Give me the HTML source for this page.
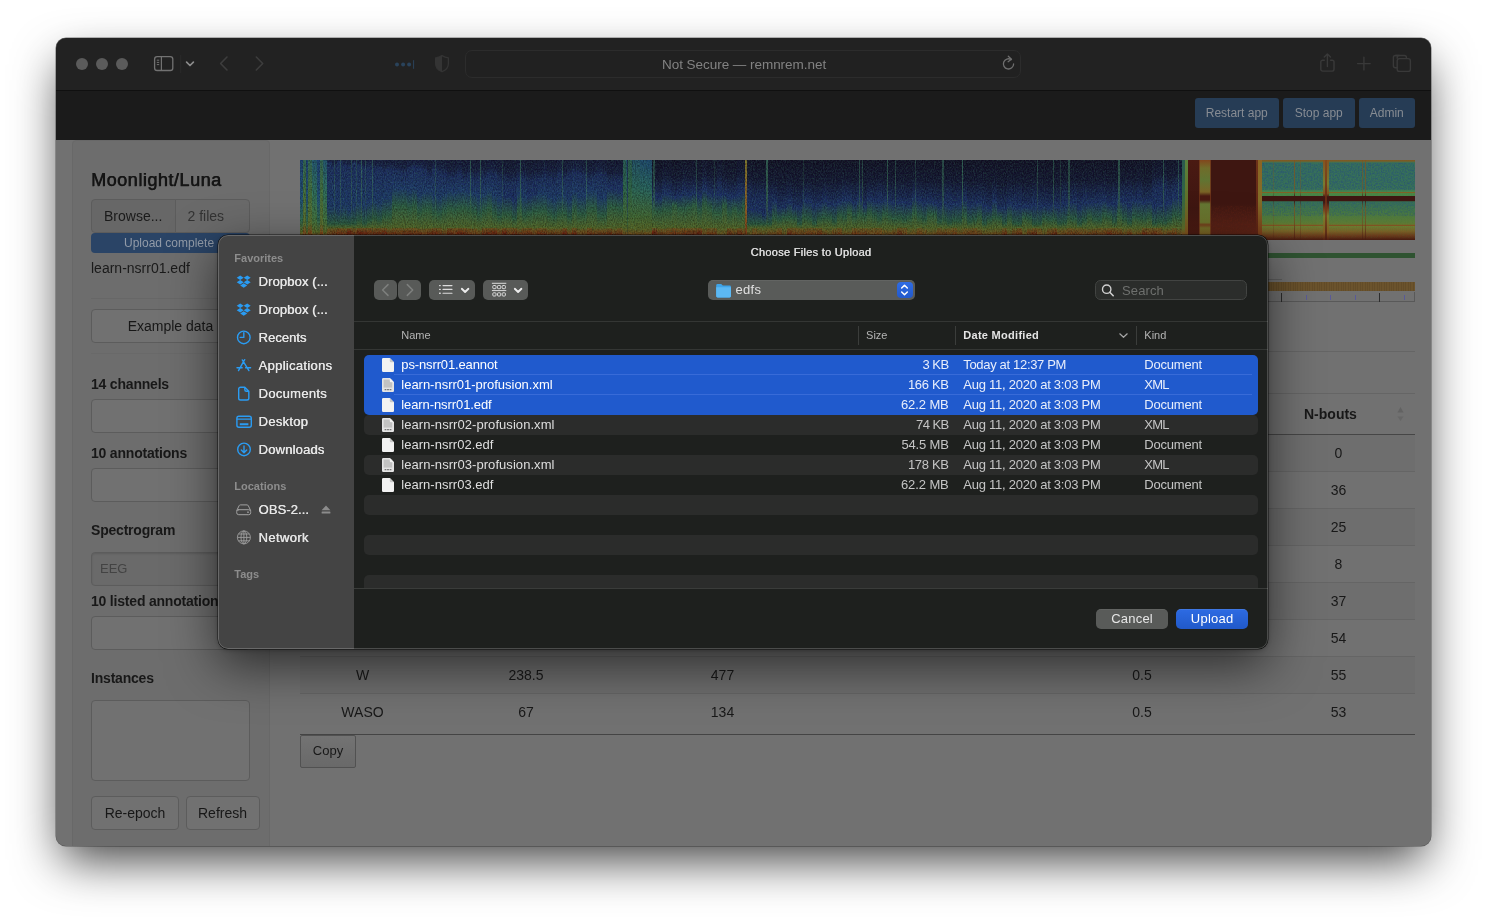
<!DOCTYPE html>
<html lang="en">
<head>
<meta charset="utf-8">
<title>Moonlight/Luna</title>
<style>
*{box-sizing:border-box}
html,body{margin:0;padding:0}
body{width:1486px;height:920px;background:#fff;overflow:hidden;position:relative;font-family:"Liberation Sans",Arial,sans-serif;font-size:14px;color:#171717}
.abs,.win *{position:absolute}
.win{position:absolute;left:55.5px;top:37.6px;width:1375.2px;height:808.7px;border-radius:10px;overflow:hidden;background:#717171;
 box-shadow:0 0 0 .5px rgba(0,0,0,.5),0 20px 48px -6px rgba(0,0,0,.75)}
.in{left:-55.5px;top:-37.6px;width:1486px;height:920px;will-change:transform}
.t{white-space:nowrap;line-height:1}
/* title bar */
.tbar{left:56px;top:38px;width:1375px;height:52px;background:#222222}
.tbar-b{left:56px;top:90px;width:1375px;height:1px;background:#101010}
.nav{left:56px;top:91px;width:1375px;height:49px;background:#1b1b1b}
.tl{width:12px;height:12px;border-radius:50%;background:#5b5b5b;top:58px}
.url{left:465px;top:50px;width:556px;height:28px;border-radius:7px;border:1px solid #2c2c2c;background:#212121}
.nbtn{top:98px;height:30px;border-radius:3px;background:#263c55;color:#878c93;font-size:12px;text-align:center;line-height:31px;white-space:nowrap}
/* web page */
.well{left:72px;top:140px;width:198px;height:720px;background:#6d6d6d;border:1px solid #686868;border-radius:4px}
.fc{background:#717171;border:1px solid #5c5c5c;border-radius:4px}
.lbl{font-weight:bold;font-size:14px;color:#181818;left:91px;letter-spacing:-.2px}
.btn{border:1px solid #5c5c5c;border-radius:4px;background:#717171;text-align:center;font-size:14px;color:#171717;white-space:nowrap}
.hl{height:1px;background:#656565;left:300px;width:1115px}
.td{font-size:14px;color:#181818;white-space:nowrap;line-height:1;transform:translateX(-50%)}
.dlg{left:218.4px;top:235.2px;width:1050px;height:413.6px;border-radius:10px;overflow:hidden;background:#1e201e;box-shadow:0 0 0 .5px rgba(0,0,0,.75),0 16px 50px rgba(0,0,0,.6),0 1px 5px rgba(0,0,0,.25)}
.dlg:after{content:"";position:absolute;left:0;top:0;right:0;bottom:0;border-radius:10px;border:1px solid rgba(255,255,255,.2);pointer-events:none}
.din{left:-218.4px;top:-235.2px;width:1486px;height:920px}
</style>
</head>
<body>
<div class="win"><div class="in">
<!--TB0-->
<div class="tbar"></div><div class="tbar-b"></div><div class="nav"></div>
<div class="tl" style="left:76px"></div><div class="tl" style="left:96px"></div><div class="tl" style="left:116px"></div>
<svg style="left:150px;top:50px" width="120" height="28" viewBox="150 50 120 28" fill="none">
 <rect x="154.6" y="56.7" width="18.2" height="13.8" rx="2.6" stroke="#727272" stroke-width="1.3"/>
 <path d="M161.4 57v13.4" stroke="#727272" stroke-width="1.2"/>
 <path d="M156.8 60.2h2.4M156.8 62.4h2.4M156.8 64.6h2.4" stroke="#727272" stroke-width="1"/>
 <path d="M180.8 55v18" stroke="#2b2b2b" stroke-width="1"/>
 <path d="M186.6 62.2l3.4 3.3 3.4-3.3" stroke="#8c8c8c" stroke-width="1.7" stroke-linecap="round" stroke-linejoin="round"/>
 <path d="M227 57l-6.4 6.5 6.4 6.5" stroke="#3d3d3d" stroke-width="1.6" stroke-linecap="round" stroke-linejoin="round"/>
 <path d="M256.3 57l6.4 6.5-6.4 6.5" stroke="#3d3d3d" stroke-width="1.6" stroke-linecap="round" stroke-linejoin="round"/>
</svg>
<svg style="left:390px;top:50px" width="64" height="28" viewBox="390 50 64 28" fill="none">
 <circle cx="397" cy="64.5" r="2" fill="#2a435b"/><circle cx="403.1" cy="64.5" r="2" fill="#2a435b"/><circle cx="409.1" cy="64.5" r="2" fill="#2a435b"/>
 <path d="M413.6 60.2v8.6" stroke="#2a435b" stroke-width="1"/>
 <path d="M442 55.6c-2 1.2-4.2 2-6.4 2.3v5.6c0 4 2.7 6.8 6.4 8.1 3.700-1.300 6.400-4.100 6.400-8.100v-5.600c-2.200-.300-4.400-1.100-6.400-2.300z" stroke="#343434" stroke-width="1.3" stroke-linejoin="round"/>
 <path d="M442 55.6c-2 1.2-4.2 2-6.400 2.300v5.600c0 4 2.700 6.800 6.400 8.100z" fill="#343434"/>
</svg>
<div class="url"></div>
<div class="t" id="urlt" style="left:662px;top:58px;font-size:13.5px;color:#828282;letter-spacing:-.04px">Not Secure — remnrem.net</div>
<svg style="left:1000px;top:55px" width="18" height="18" viewBox="1000 55 18 18" fill="none">
 <path d="M1013.6 63.900a5.100 5.100 0 1 1-2.400-4.350" stroke="#6f6f6f" stroke-width="1.3" stroke-linecap="round"/>
 <path d="M1008.3 56.300l3.200 2.900-3.400 2.500" stroke="#6f6f6f" stroke-width="1.3" stroke-linecap="round" stroke-linejoin="round"/>
</svg>
<svg style="left:1314px;top:50px" width="104" height="28" viewBox="1314 50 104 28" fill="none" stroke="#393939" stroke-width="1.4" stroke-linecap="round" stroke-linejoin="round">
 <path d="M1324.300 60.300h-1.700a1.800 1.800 0 0 0-1.800 1.800v7.200a1.800 1.800 0 0 0 1.800 1.800h9.600a1.800 1.800 0 0 0 1.800-1.800v-7.200a1.800 1.800 0 0 0-1.800-1.800h-1.700"/>
 <path d="M1327.400 66.500v-12.300M1324.300 57l3.100-3.100 3.100 3.100"/>
 <path d="M1363.900 57.300v12.600M1357.600 63.600h12.600"/>
 <path d="M1397.200 58.300v-.8a2 2 0 0 1 2-2h-3.800a2 2 0 0 0-2 2v8.200a2 2 0 0 0 2 2h1.600" />
 <path d="M1395.400 55.500h9a2 2 0 0 1 2 2v.8"/>
 <rect x="1397.200" y="58.600" width="13.200" height="12.800" rx="2.200"/>
</svg>
<div class="nbtn" id="nb1" style="left:1194.5px;width:84.5px">Restart app</div>
<div class="nbtn" id="nb2" style="left:1283px;width:71.500px">Stop app</div>
<div class="nbtn" id="nb3" style="left:1358.500px;width:56.500px">Admin</div>
<!--TB1-->
<!--PG0-->
<div class="well"></div>
<div class="t" id="h4" style="left:91px;top:171px;font-size:18px;color:#161616;letter-spacing:.53px;text-shadow:.5px 0 0 #161616;-webkit-text-stroke:.25px #161616">Moonlight/Luna</div>
<div class="fc" style="left:91px;top:199px;width:85px;height:34px;border-radius:4px 0 0 4px;background:#676767"></div>
<div class="fc" style="left:175px;top:199px;width:75px;height:34px;border-radius:0 4px 4px 0;background:#6a6a6a"></div>
<div class="t" style="left:104px;top:209px;font-size:14px;color:#1a1a1a">Browse...</div>
<div class="t" style="left:187.500px;top:209px;font-size:14px;color:#333">2 files</div>
<div style="left:91px;top:233px;width:159px;height:20px;border-radius:4px;background:#2a4466"></div>
<div class="t" style="left:124px;top:237px;font-size:12px;color:#929ba8">Upload complete</div>
<div class="t" style="left:91px;top:261px;font-size:14px;color:#1a1a1a">learn-nsrr01.edf</div>
<div style="left:91px;top:298px;width:159px;height:1px;background:#676767"></div>
<div class="btn" style="left:91px;top:309px;width:159px;height:34px;line-height:32px">Example data</div>
<div style="left:91px;top:353px;width:159px;height:1px;background:#696969"></div>
<div class="t lbl" style="top:377px">14 channels</div>
<div class="fc" style="left:91px;top:399px;width:159px;height:34px"></div>
<div class="t lbl" style="top:445.500px">10 annotations</div>
<div class="fc" style="left:91px;top:468px;width:159px;height:34px"></div>
<div class="t lbl" style="top:523px">Spectrogram</div>
<div class="fc" style="left:91px;top:552px;width:159px;height:34px;background:#6a6a6a;box-shadow:inset 0 1px 2px rgba(0,0,0,.12)"></div>
<div class="t" style="left:100px;top:562px;font-size:13px;color:#434343">EEG</div>
<div class="t lbl" style="top:594px">10 listed annotations</div>
<div class="fc" style="left:91px;top:616px;width:159px;height:34px"></div>
<div class="t lbl" style="top:671px">Instances</div>
<div class="fc" style="left:91px;top:700px;width:159px;height:81px"></div>
<div class="btn" style="left:91px;top:796px;width:88px;height:34px;line-height:32px">Re-epoch</div>
<div class="btn" style="left:185.500px;top:796px;width:74px;height:34px;line-height:32px">Refresh</div>
<!--SP0-->
<svg style="left:300px;top:160px" width="1115" height="80" viewBox="0 0 1115 80" preserveAspectRatio="none" shape-rendering="crispEdges"><defs><linearGradient id="g1" x1="0" y1="0" x2="0" y2="1"><stop offset="0.000" stop-color="#181b40"/><stop offset="0.019" stop-color="#191f48"/><stop offset="0.035" stop-color="#1d2b5e"/><stop offset="0.596" stop-color="#1f386a"/><stop offset="0.800" stop-color="#2f5d43"/><stop offset="0.850" stop-color="#5d6f2c"/><stop offset="0.866" stop-color="#785e22"/><stop offset="0.946" stop-color="#843b16"/><stop offset="1.000" stop-color="#7e2610"/></linearGradient><linearGradient id="g2" x1="0" y1="0" x2="0" y2="1"><stop offset="0.000" stop-color="#181b3f"/><stop offset="0.050" stop-color="#191f48"/><stop offset="0.091" stop-color="#1d2b5e"/><stop offset="0.585" stop-color="#1f386a"/><stop offset="0.800" stop-color="#2f5d43"/><stop offset="0.850" stop-color="#5d6f2c"/><stop offset="0.861" stop-color="#785e22"/><stop offset="0.941" stop-color="#802e12"/><stop offset="1.000" stop-color="#7e2610"/></linearGradient><linearGradient id="g3" x1="0" y1="0" x2="0" y2="1"><stop offset="0.000" stop-color="#181b40"/><stop offset="0.011" stop-color="#191f48"/><stop offset="0.020" stop-color="#1d2b5e"/><stop offset="0.622" stop-color="#1f386a"/><stop offset="0.800" stop-color="#2f5d43"/><stop offset="0.850" stop-color="#5d6f2c"/><stop offset="0.825" stop-color="#785e22"/><stop offset="0.905" stop-color="#843b16"/><stop offset="1.000" stop-color="#7e2610"/></linearGradient><linearGradient id="g4" x1="0" y1="0" x2="0" y2="1"><stop offset="0.000" stop-color="#181b40"/><stop offset="0.042" stop-color="#191f48"/><stop offset="0.076" stop-color="#1d2b5e"/><stop offset="0.573" stop-color="#1f386a"/><stop offset="0.793" stop-color="#2f5d43"/><stop offset="0.850" stop-color="#5d6f2c"/><stop offset="0.860" stop-color="#785e22"/><stop offset="0.940" stop-color="#802e12"/><stop offset="1.000" stop-color="#7e2610"/></linearGradient><linearGradient id="g5" x1="0" y1="0" x2="0" y2="1"><stop offset="0.000" stop-color="#181b3f"/><stop offset="0.050" stop-color="#191f48"/><stop offset="0.090" stop-color="#1d2b5e"/><stop offset="0.632" stop-color="#1f386a"/><stop offset="0.800" stop-color="#2f5d43"/><stop offset="0.850" stop-color="#5d6f2c"/><stop offset="0.824" stop-color="#785e22"/><stop offset="0.904" stop-color="#7e2610"/><stop offset="1.000" stop-color="#7e2610"/></linearGradient><linearGradient id="g6" x1="0" y1="0" x2="0" y2="1"><stop offset="0.000" stop-color="#181b40"/><stop offset="0.021" stop-color="#191f48"/><stop offset="0.037" stop-color="#1d2b5e"/><stop offset="0.574" stop-color="#1f386a"/><stop offset="0.794" stop-color="#2f5d43"/><stop offset="0.850" stop-color="#5d6f2c"/><stop offset="0.859" stop-color="#785e22"/><stop offset="0.939" stop-color="#802e12"/><stop offset="1.000" stop-color="#7e2610"/></linearGradient><linearGradient id="g7" x1="0" y1="0" x2="0" y2="1"><stop offset="0.000" stop-color="#181b40"/><stop offset="0.036" stop-color="#191f48"/><stop offset="0.066" stop-color="#1d2b5e"/><stop offset="0.539" stop-color="#1f386a"/><stop offset="0.759" stop-color="#2f5d43"/><stop offset="0.850" stop-color="#5d6f2c"/><stop offset="0.828" stop-color="#785e22"/><stop offset="0.908" stop-color="#7e2610"/><stop offset="1.000" stop-color="#7e2610"/></linearGradient><linearGradient id="g8" x1="0" y1="0" x2="0" y2="1"><stop offset="0.000" stop-color="#181a3f"/><stop offset="0.054" stop-color="#191f47"/><stop offset="0.098" stop-color="#1d2b5e"/><stop offset="0.578" stop-color="#1f386a"/><stop offset="0.798" stop-color="#2f5d43"/><stop offset="0.850" stop-color="#5d6f2c"/><stop offset="0.827" stop-color="#785e22"/><stop offset="0.907" stop-color="#802e12"/><stop offset="1.000" stop-color="#7e2610"/></linearGradient><linearGradient id="g9" x1="0" y1="0" x2="0" y2="1"><stop offset="0.000" stop-color="#181b40"/><stop offset="0.046" stop-color="#191f48"/><stop offset="0.084" stop-color="#1d2b5e"/><stop offset="0.536" stop-color="#1f386a"/><stop offset="0.756" stop-color="#2f5d43"/><stop offset="0.850" stop-color="#5d6f2c"/><stop offset="0.824" stop-color="#785e22"/><stop offset="0.904" stop-color="#843b16"/><stop offset="1.000" stop-color="#7e2610"/></linearGradient><linearGradient id="g10" x1="0" y1="0" x2="0" y2="1"><stop offset="0.000" stop-color="#181a3e"/><stop offset="0.062" stop-color="#191f46"/><stop offset="0.113" stop-color="#1d2b5e"/><stop offset="0.504" stop-color="#1f386a"/><stop offset="0.724" stop-color="#2f5d43"/><stop offset="0.850" stop-color="#5d6f2c"/><stop offset="0.857" stop-color="#785e22"/><stop offset="0.937" stop-color="#7e2610"/><stop offset="1.000" stop-color="#7e2610"/></linearGradient><linearGradient id="g11" x1="0" y1="0" x2="0" y2="1"><stop offset="0.000" stop-color="#181a3e"/><stop offset="0.056" stop-color="#191f47"/><stop offset="0.102" stop-color="#1d2b5e"/><stop offset="0.530" stop-color="#1f386a"/><stop offset="0.750" stop-color="#2f5d43"/><stop offset="0.850" stop-color="#5d6f2c"/><stop offset="0.845" stop-color="#785e22"/><stop offset="0.925" stop-color="#802e12"/><stop offset="1.000" stop-color="#7e2610"/></linearGradient><linearGradient id="g12" x1="0" y1="0" x2="0" y2="1"><stop offset="0.000" stop-color="#17193c"/><stop offset="0.077" stop-color="#191e45"/><stop offset="0.140" stop-color="#1d2b5e"/><stop offset="0.478" stop-color="#1f386a"/><stop offset="0.698" stop-color="#2f5d43"/><stop offset="0.850" stop-color="#5d6f2c"/><stop offset="0.837" stop-color="#785e22"/><stop offset="0.917" stop-color="#7e2610"/><stop offset="1.000" stop-color="#7e2610"/></linearGradient><linearGradient id="g13" x1="0" y1="0" x2="0" y2="1"><stop offset="0.000" stop-color="#171a3d"/><stop offset="0.065" stop-color="#191e46"/><stop offset="0.117" stop-color="#1d2b5e"/><stop offset="0.473" stop-color="#1f386a"/><stop offset="0.693" stop-color="#2f5d43"/><stop offset="0.850" stop-color="#5d6f2c"/><stop offset="0.871" stop-color="#785e22"/><stop offset="0.951" stop-color="#7e2610"/><stop offset="1.000" stop-color="#7e2610"/></linearGradient><linearGradient id="g14" x1="0" y1="0" x2="0" y2="1"><stop offset="0.000" stop-color="#17193c"/><stop offset="0.072" stop-color="#191e45"/><stop offset="0.130" stop-color="#1d2b5e"/><stop offset="0.351" stop-color="#1f386a"/><stop offset="0.571" stop-color="#2f5d43"/><stop offset="0.850" stop-color="#5d6f2c"/><stop offset="0.856" stop-color="#785e22"/><stop offset="0.936" stop-color="#802e12"/><stop offset="1.000" stop-color="#7e2610"/></linearGradient><linearGradient id="g15" x1="0" y1="0" x2="0" y2="1"><stop offset="0.000" stop-color="#17193b"/><stop offset="0.080" stop-color="#191e45"/><stop offset="0.146" stop-color="#1d2b5d"/><stop offset="0.358" stop-color="#1f386a"/><stop offset="0.578" stop-color="#2f5d43"/><stop offset="0.850" stop-color="#5d6f2c"/><stop offset="0.854" stop-color="#785e22"/><stop offset="0.934" stop-color="#843b16"/><stop offset="1.000" stop-color="#7e2610"/></linearGradient><linearGradient id="g16" x1="0" y1="0" x2="0" y2="1"><stop offset="0.000" stop-color="#171839"/><stop offset="0.095" stop-color="#181d43"/><stop offset="0.173" stop-color="#1d2a5d"/><stop offset="0.351" stop-color="#1f386a"/><stop offset="0.571" stop-color="#2f5d43"/><stop offset="0.850" stop-color="#5d6f2c"/><stop offset="0.859" stop-color="#785e22"/><stop offset="0.939" stop-color="#7e2610"/><stop offset="1.000" stop-color="#7e2610"/></linearGradient><linearGradient id="g17" x1="0" y1="0" x2="0" y2="1"><stop offset="0.000" stop-color="#171a3d"/><stop offset="0.065" stop-color="#191e46"/><stop offset="0.118" stop-color="#1d2b5e"/><stop offset="0.385" stop-color="#1f386a"/><stop offset="0.605" stop-color="#2f5d43"/><stop offset="0.850" stop-color="#5d6f2c"/><stop offset="0.855" stop-color="#785e22"/><stop offset="0.935" stop-color="#7e2610"/><stop offset="1.000" stop-color="#7e2610"/></linearGradient><linearGradient id="g18" x1="0" y1="0" x2="0" y2="1"><stop offset="0.000" stop-color="#181a3f"/><stop offset="0.054" stop-color="#191f47"/><stop offset="0.098" stop-color="#1d2b5e"/><stop offset="0.355" stop-color="#1f386a"/><stop offset="0.575" stop-color="#2f5d43"/><stop offset="0.850" stop-color="#5d6f2c"/><stop offset="0.839" stop-color="#785e22"/><stop offset="0.919" stop-color="#843b16"/><stop offset="1.000" stop-color="#7e2610"/></linearGradient><linearGradient id="g19" x1="0" y1="0" x2="0" y2="1"><stop offset="0.000" stop-color="#181a3e"/><stop offset="0.057" stop-color="#191f47"/><stop offset="0.104" stop-color="#1d2b5e"/><stop offset="0.430" stop-color="#1f386a"/><stop offset="0.650" stop-color="#2f5d43"/><stop offset="0.850" stop-color="#5d6f2c"/><stop offset="0.865" stop-color="#785e22"/><stop offset="0.945" stop-color="#7e2610"/><stop offset="1.000" stop-color="#7e2610"/></linearGradient><linearGradient id="g20" x1="0" y1="0" x2="0" y2="1"><stop offset="0.000" stop-color="#17193c"/><stop offset="0.073" stop-color="#191e45"/><stop offset="0.133" stop-color="#1d2b5e"/><stop offset="0.393" stop-color="#1f386a"/><stop offset="0.613" stop-color="#2f5d43"/><stop offset="0.850" stop-color="#5d6f2c"/><stop offset="0.867" stop-color="#785e22"/><stop offset="0.947" stop-color="#843b16"/><stop offset="1.000" stop-color="#7e2610"/></linearGradient><linearGradient id="g21" x1="0" y1="0" x2="0" y2="1"><stop offset="0.000" stop-color="#161737"/><stop offset="0.113" stop-color="#181c41"/><stop offset="0.206" stop-color="#1c2a5d"/><stop offset="0.391" stop-color="#1f386a"/><stop offset="0.611" stop-color="#2f5d43"/><stop offset="0.850" stop-color="#5d6f2c"/><stop offset="0.863" stop-color="#785e22"/><stop offset="0.943" stop-color="#7e2610"/><stop offset="1.000" stop-color="#7e2610"/></linearGradient><linearGradient id="g22" x1="0" y1="0" x2="0" y2="1"><stop offset="0.000" stop-color="#17193d"/><stop offset="0.069" stop-color="#191e46"/><stop offset="0.125" stop-color="#1d2b5e"/><stop offset="0.442" stop-color="#1f386a"/><stop offset="0.662" stop-color="#2f5d43"/><stop offset="0.850" stop-color="#5d6f2c"/><stop offset="0.829" stop-color="#785e22"/><stop offset="0.909" stop-color="#802e12"/><stop offset="1.000" stop-color="#7e2610"/></linearGradient><linearGradient id="g23" x1="0" y1="0" x2="0" y2="1"><stop offset="0.000" stop-color="#17183a"/><stop offset="0.091" stop-color="#181d43"/><stop offset="0.166" stop-color="#1d2a5d"/><stop offset="0.461" stop-color="#1f386a"/><stop offset="0.681" stop-color="#2f5d43"/><stop offset="0.850" stop-color="#5d6f2c"/><stop offset="0.855" stop-color="#785e22"/><stop offset="0.935" stop-color="#802e12"/><stop offset="1.000" stop-color="#7e2610"/></linearGradient><linearGradient id="g24" x1="0" y1="0" x2="0" y2="1"><stop offset="0.000" stop-color="#171839"/><stop offset="0.098" stop-color="#181d43"/><stop offset="0.178" stop-color="#1d2a5d"/><stop offset="0.419" stop-color="#1f386a"/><stop offset="0.639" stop-color="#2f5d43"/><stop offset="0.850" stop-color="#5d6f2c"/><stop offset="0.882" stop-color="#785e22"/><stop offset="0.962" stop-color="#7e2610"/><stop offset="1.000" stop-color="#7e2610"/></linearGradient><linearGradient id="g25" x1="0" y1="0" x2="0" y2="1"><stop offset="0.000" stop-color="#161635"/><stop offset="0.125" stop-color="#181b40"/><stop offset="0.227" stop-color="#1c2a5c"/><stop offset="0.388" stop-color="#1f386a"/><stop offset="0.608" stop-color="#2f5d43"/><stop offset="0.850" stop-color="#5d6f2c"/><stop offset="0.849" stop-color="#785e22"/><stop offset="0.929" stop-color="#7e2610"/><stop offset="1.000" stop-color="#7e2610"/></linearGradient><linearGradient id="g26" x1="0" y1="0" x2="0" y2="1"><stop offset="0.000" stop-color="#161636"/><stop offset="0.119" stop-color="#181c40"/><stop offset="0.216" stop-color="#1c2a5c"/><stop offset="0.401" stop-color="#1f386a"/><stop offset="0.621" stop-color="#2f5d43"/><stop offset="0.850" stop-color="#5d6f2c"/><stop offset="0.836" stop-color="#785e22"/><stop offset="0.916" stop-color="#843b16"/><stop offset="1.000" stop-color="#7e2610"/></linearGradient><linearGradient id="g27" x1="0" y1="0" x2="0" y2="1"><stop offset="0.000" stop-color="#171839"/><stop offset="0.095" stop-color="#181d43"/><stop offset="0.173" stop-color="#1d2a5d"/><stop offset="0.385" stop-color="#1f386a"/><stop offset="0.605" stop-color="#2f5d43"/><stop offset="0.850" stop-color="#5d6f2c"/><stop offset="0.836" stop-color="#785e22"/><stop offset="0.916" stop-color="#7e2610"/><stop offset="1.000" stop-color="#7e2610"/></linearGradient><linearGradient id="g28" x1="0" y1="0" x2="0" y2="1"><stop offset="0.000" stop-color="#161534"/><stop offset="0.135" stop-color="#171b3f"/><stop offset="0.245" stop-color="#1c2a5c"/><stop offset="0.380" stop-color="#1f386a"/><stop offset="0.600" stop-color="#2f5d43"/><stop offset="0.850" stop-color="#5d6f2c"/><stop offset="0.840" stop-color="#785e22"/><stop offset="0.920" stop-color="#802e12"/><stop offset="1.000" stop-color="#7e2610"/></linearGradient><linearGradient id="g29" x1="0" y1="0" x2="0" y2="1"><stop offset="0.000" stop-color="#161736"/><stop offset="0.116" stop-color="#181c41"/><stop offset="0.211" stop-color="#1c2a5c"/><stop offset="0.404" stop-color="#1f386a"/><stop offset="0.624" stop-color="#2f5d43"/><stop offset="0.850" stop-color="#5d6f2c"/><stop offset="0.860" stop-color="#785e22"/><stop offset="0.940" stop-color="#802e12"/><stop offset="1.000" stop-color="#7e2610"/></linearGradient><linearGradient id="g30" x1="0" y1="0" x2="0" y2="1"><stop offset="0.000" stop-color="#161534"/><stop offset="0.133" stop-color="#181b3f"/><stop offset="0.242" stop-color="#1c2a5c"/><stop offset="0.425" stop-color="#1f386a"/><stop offset="0.645" stop-color="#2f5d43"/><stop offset="0.850" stop-color="#5d6f2c"/><stop offset="0.863" stop-color="#785e22"/><stop offset="0.943" stop-color="#843b16"/><stop offset="1.000" stop-color="#7e2610"/></linearGradient><linearGradient id="g31" x1="0" y1="0" x2="0" y2="1"><stop offset="0.000" stop-color="#161635"/><stop offset="0.122" stop-color="#181c40"/><stop offset="0.221" stop-color="#1c2a5c"/><stop offset="0.470" stop-color="#1f386a"/><stop offset="0.690" stop-color="#2f5d43"/><stop offset="0.850" stop-color="#5d6f2c"/><stop offset="0.887" stop-color="#785e22"/><stop offset="0.967" stop-color="#7e2610"/><stop offset="1.000" stop-color="#7e2610"/></linearGradient><linearGradient id="g32" x1="0" y1="0" x2="0" y2="1"><stop offset="0.000" stop-color="#161636"/><stop offset="0.120" stop-color="#181c40"/><stop offset="0.219" stop-color="#1c2a5c"/><stop offset="0.416" stop-color="#1f386a"/><stop offset="0.636" stop-color="#2f5d43"/><stop offset="0.850" stop-color="#5d6f2c"/><stop offset="0.854" stop-color="#785e22"/><stop offset="0.934" stop-color="#7e2610"/><stop offset="1.000" stop-color="#7e2610"/></linearGradient><linearGradient id="g33" x1="0" y1="0" x2="0" y2="1"><stop offset="0.000" stop-color="#161738"/><stop offset="0.103" stop-color="#181d42"/><stop offset="0.188" stop-color="#1c2a5d"/><stop offset="0.380" stop-color="#1f386a"/><stop offset="0.600" stop-color="#2f5d43"/><stop offset="0.850" stop-color="#5d6f2c"/><stop offset="0.835" stop-color="#785e22"/><stop offset="0.915" stop-color="#802e12"/><stop offset="1.000" stop-color="#7e2610"/></linearGradient><linearGradient id="g34" x1="0" y1="0" x2="0" y2="1"><stop offset="0.000" stop-color="#161737"/><stop offset="0.108" stop-color="#181c42"/><stop offset="0.196" stop-color="#1c2a5d"/><stop offset="0.447" stop-color="#1f386a"/><stop offset="0.667" stop-color="#2f5d43"/><stop offset="0.850" stop-color="#5d6f2c"/><stop offset="0.827" stop-color="#785e22"/><stop offset="0.907" stop-color="#802e12"/><stop offset="1.000" stop-color="#7e2610"/></linearGradient><linearGradient id="g35" x1="0" y1="0" x2="0" y2="1"><stop offset="0.000" stop-color="#161534"/><stop offset="0.133" stop-color="#181b3f"/><stop offset="0.241" stop-color="#1c2a5c"/><stop offset="0.492" stop-color="#1f386a"/><stop offset="0.712" stop-color="#2f5d43"/><stop offset="0.850" stop-color="#5d6f2c"/><stop offset="0.863" stop-color="#785e22"/><stop offset="0.943" stop-color="#843b16"/><stop offset="1.000" stop-color="#7e2610"/></linearGradient><linearGradient id="g36" x1="0" y1="0" x2="0" y2="1"><stop offset="0.000" stop-color="#151431"/><stop offset="0.153" stop-color="#171a3d"/><stop offset="0.278" stop-color="#1c2a5b"/><stop offset="0.454" stop-color="#1e2f66"/><stop offset="0.674" stop-color="#2f5d43"/><stop offset="0.850" stop-color="#5d6f2c"/><stop offset="0.830" stop-color="#785e22"/><stop offset="0.910" stop-color="#7e2610"/><stop offset="1.000" stop-color="#7e2610"/></linearGradient><linearGradient id="g37" x1="0" y1="0" x2="0" y2="1"><stop offset="0.000" stop-color="#151430"/><stop offset="0.159" stop-color="#171a3c"/><stop offset="0.289" stop-color="#1c2a5b"/><stop offset="0.456" stop-color="#1e2f66"/><stop offset="0.676" stop-color="#2f5d43"/><stop offset="0.850" stop-color="#5d6f2c"/><stop offset="0.853" stop-color="#785e22"/><stop offset="0.933" stop-color="#843b16"/><stop offset="1.000" stop-color="#7e2610"/></linearGradient><linearGradient id="g38" x1="0" y1="0" x2="0" y2="1"><stop offset="0.000" stop-color="#151431"/><stop offset="0.155" stop-color="#171a3d"/><stop offset="0.282" stop-color="#1c2a5b"/><stop offset="0.506" stop-color="#1e2f66"/><stop offset="0.726" stop-color="#2f5d43"/><stop offset="0.850" stop-color="#5d6f2c"/><stop offset="0.853" stop-color="#785e22"/><stop offset="0.933" stop-color="#7e2610"/><stop offset="1.000" stop-color="#7e2610"/></linearGradient><linearGradient id="g39" x1="0" y1="0" x2="0" y2="1"><stop offset="0.000" stop-color="#161635"/><stop offset="0.127" stop-color="#181b40"/><stop offset="0.231" stop-color="#1c2a5c"/><stop offset="0.407" stop-color="#1f386a"/><stop offset="0.627" stop-color="#2f5d43"/><stop offset="0.850" stop-color="#5d6f2c"/><stop offset="0.872" stop-color="#785e22"/><stop offset="0.952" stop-color="#7e2610"/><stop offset="1.000" stop-color="#7e2610"/></linearGradient><linearGradient id="g40" x1="0" y1="0" x2="0" y2="1"><stop offset="0.000" stop-color="#161534"/><stop offset="0.134" stop-color="#171b3f"/><stop offset="0.244" stop-color="#1c2a5c"/><stop offset="0.473" stop-color="#1f386a"/><stop offset="0.693" stop-color="#2f5d43"/><stop offset="0.850" stop-color="#5d6f2c"/><stop offset="0.856" stop-color="#785e22"/><stop offset="0.936" stop-color="#802e12"/><stop offset="1.000" stop-color="#7e2610"/></linearGradient><linearGradient id="g41" x1="0" y1="0" x2="0" y2="1"><stop offset="0.000" stop-color="#151431"/><stop offset="0.158" stop-color="#171a3c"/><stop offset="0.286" stop-color="#1c2a5b"/><stop offset="0.453" stop-color="#1e2f66"/><stop offset="0.673" stop-color="#2f5d43"/><stop offset="0.850" stop-color="#5d6f2c"/><stop offset="0.830" stop-color="#785e22"/><stop offset="0.910" stop-color="#843b16"/><stop offset="1.000" stop-color="#7e2610"/></linearGradient><linearGradient id="g42" x1="0" y1="0" x2="0" y2="1"><stop offset="0.000" stop-color="#151532"/><stop offset="0.144" stop-color="#171b3e"/><stop offset="0.263" stop-color="#1c2a5c"/><stop offset="0.426" stop-color="#1e2f66"/><stop offset="0.646" stop-color="#2f5d43"/><stop offset="0.850" stop-color="#5d6f2c"/><stop offset="0.865" stop-color="#785e22"/><stop offset="0.945" stop-color="#843b16"/><stop offset="1.000" stop-color="#7e2610"/></linearGradient><linearGradient id="g43" x1="0" y1="0" x2="0" y2="1"><stop offset="0.000" stop-color="#161533"/><stop offset="0.139" stop-color="#171b3e"/><stop offset="0.252" stop-color="#1c2a5c"/><stop offset="0.421" stop-color="#1f386a"/><stop offset="0.641" stop-color="#2f5d43"/><stop offset="0.850" stop-color="#5d6f2c"/><stop offset="0.846" stop-color="#785e22"/><stop offset="0.926" stop-color="#802e12"/><stop offset="1.000" stop-color="#7e2610"/></linearGradient><linearGradient id="g44" x1="0" y1="0" x2="0" y2="1"><stop offset="0.000" stop-color="#161636"/><stop offset="0.117" stop-color="#181c41"/><stop offset="0.213" stop-color="#1c2a5c"/><stop offset="0.417" stop-color="#1f386a"/><stop offset="0.637" stop-color="#2f5d43"/><stop offset="0.850" stop-color="#5d6f2c"/><stop offset="0.858" stop-color="#785e22"/><stop offset="0.938" stop-color="#7e2610"/><stop offset="1.000" stop-color="#7e2610"/></linearGradient><linearGradient id="g45" x1="0" y1="0" x2="0" y2="1"><stop offset="0.000" stop-color="#161634"/><stop offset="0.130" stop-color="#181b3f"/><stop offset="0.237" stop-color="#1c2a5c"/><stop offset="0.464" stop-color="#1f386a"/><stop offset="0.684" stop-color="#2f5d43"/><stop offset="0.850" stop-color="#5d6f2c"/><stop offset="0.875" stop-color="#785e22"/><stop offset="0.955" stop-color="#802e12"/><stop offset="1.000" stop-color="#7e2610"/></linearGradient><linearGradient id="g46" x1="0" y1="0" x2="0" y2="1"><stop offset="0.000" stop-color="#161533"/><stop offset="0.137" stop-color="#171b3f"/><stop offset="0.249" stop-color="#1c2a5c"/><stop offset="0.488" stop-color="#1f386a"/><stop offset="0.708" stop-color="#2f5d43"/><stop offset="0.850" stop-color="#5d6f2c"/><stop offset="0.872" stop-color="#785e22"/><stop offset="0.952" stop-color="#802e12"/><stop offset="1.000" stop-color="#7e2610"/></linearGradient><linearGradient id="g47" x1="0" y1="0" x2="0" y2="1"><stop offset="0.000" stop-color="#171738"/><stop offset="0.101" stop-color="#181d42"/><stop offset="0.184" stop-color="#1d2a5d"/><stop offset="0.449" stop-color="#1f386a"/><stop offset="0.669" stop-color="#2f5d43"/><stop offset="0.850" stop-color="#5d6f2c"/><stop offset="0.871" stop-color="#785e22"/><stop offset="0.951" stop-color="#843b16"/><stop offset="1.000" stop-color="#7e2610"/></linearGradient><linearGradient id="g48" x1="0" y1="0" x2="0" y2="1"><stop offset="0.000" stop-color="#161634"/><stop offset="0.131" stop-color="#181b3f"/><stop offset="0.239" stop-color="#1c2a5c"/><stop offset="0.447" stop-color="#1f386a"/><stop offset="0.667" stop-color="#2f5d43"/><stop offset="0.850" stop-color="#5d6f2c"/><stop offset="0.834" stop-color="#785e22"/><stop offset="0.914" stop-color="#7e2610"/><stop offset="1.000" stop-color="#7e2610"/></linearGradient><linearGradient id="g49" x1="0" y1="0" x2="0" y2="1"><stop offset="0.000" stop-color="#161737"/><stop offset="0.110" stop-color="#181c41"/><stop offset="0.200" stop-color="#1c2a5d"/><stop offset="0.502" stop-color="#1f386a"/><stop offset="0.722" stop-color="#2f5d43"/><stop offset="0.850" stop-color="#5d6f2c"/><stop offset="0.889" stop-color="#785e22"/><stop offset="0.969" stop-color="#7e2610"/><stop offset="1.000" stop-color="#7e2610"/></linearGradient><linearGradient id="g50" x1="0" y1="0" x2="0" y2="1"><stop offset="0.000" stop-color="#17183a"/><stop offset="0.087" stop-color="#181d44"/><stop offset="0.159" stop-color="#1d2a5d"/><stop offset="0.402" stop-color="#1f386a"/><stop offset="0.622" stop-color="#2f5d43"/><stop offset="0.850" stop-color="#5d6f2c"/><stop offset="0.853" stop-color="#785e22"/><stop offset="0.933" stop-color="#7e2610"/><stop offset="1.000" stop-color="#7e2610"/></linearGradient><linearGradient id="g51" x1="0" y1="0" x2="0" y2="1"><stop offset="0.000" stop-color="#171839"/><stop offset="0.096" stop-color="#181d43"/><stop offset="0.175" stop-color="#1d2a5d"/><stop offset="0.460" stop-color="#1f386a"/><stop offset="0.680" stop-color="#2f5d43"/><stop offset="0.850" stop-color="#5d6f2c"/><stop offset="0.883" stop-color="#785e22"/><stop offset="0.963" stop-color="#843b16"/><stop offset="1.000" stop-color="#7e2610"/></linearGradient><linearGradient id="g52" x1="0" y1="0" x2="0" y2="1"><stop offset="0.000" stop-color="#161736"/><stop offset="0.114" stop-color="#181c41"/><stop offset="0.208" stop-color="#1c2a5c"/><stop offset="0.458" stop-color="#1f386a"/><stop offset="0.678" stop-color="#2f5d43"/><stop offset="0.850" stop-color="#5d6f2c"/><stop offset="0.876" stop-color="#785e22"/><stop offset="0.956" stop-color="#843b16"/><stop offset="1.000" stop-color="#7e2610"/></linearGradient><linearGradient id="g53" x1="0" y1="0" x2="0" y2="1"><stop offset="0.000" stop-color="#161533"/><stop offset="0.137" stop-color="#171b3f"/><stop offset="0.249" stop-color="#1c2a5c"/><stop offset="0.389" stop-color="#1f386a"/><stop offset="0.609" stop-color="#2f5d43"/><stop offset="0.850" stop-color="#5d6f2c"/><stop offset="0.847" stop-color="#785e22"/><stop offset="0.927" stop-color="#802e12"/><stop offset="1.000" stop-color="#7e2610"/></linearGradient><linearGradient id="g54" x1="0" y1="0" x2="0" y2="1"><stop offset="0.000" stop-color="#161636"/><stop offset="0.120" stop-color="#181c40"/><stop offset="0.219" stop-color="#1c2a5c"/><stop offset="0.391" stop-color="#1f386a"/><stop offset="0.611" stop-color="#2f5d43"/><stop offset="0.850" stop-color="#5d6f2c"/><stop offset="0.875" stop-color="#785e22"/><stop offset="0.955" stop-color="#7e2610"/><stop offset="1.000" stop-color="#7e2610"/></linearGradient><linearGradient id="g55" x1="0" y1="0" x2="0" y2="1"><stop offset="0.000" stop-color="#171738"/><stop offset="0.102" stop-color="#181d42"/><stop offset="0.185" stop-color="#1d2a5d"/><stop offset="0.477" stop-color="#1f386a"/><stop offset="0.697" stop-color="#2f5d43"/><stop offset="0.850" stop-color="#5d6f2c"/><stop offset="0.871" stop-color="#785e22"/><stop offset="0.951" stop-color="#7e2610"/><stop offset="1.000" stop-color="#7e2610"/></linearGradient><linearGradient id="g56" x1="0" y1="0" x2="0" y2="1"><stop offset="0.000" stop-color="#161635"/><stop offset="0.122" stop-color="#181c40"/><stop offset="0.222" stop-color="#1c2a5c"/><stop offset="0.472" stop-color="#1f386a"/><stop offset="0.692" stop-color="#2f5d43"/><stop offset="0.850" stop-color="#5d6f2c"/><stop offset="0.871" stop-color="#785e22"/><stop offset="0.951" stop-color="#802e12"/><stop offset="1.000" stop-color="#7e2610"/></linearGradient><linearGradient id="g57" x1="0" y1="0" x2="0" y2="1"><stop offset="0.000" stop-color="#151431"/><stop offset="0.157" stop-color="#171a3c"/><stop offset="0.286" stop-color="#1c2a5b"/><stop offset="0.357" stop-color="#1e2f66"/><stop offset="0.577" stop-color="#2f5d43"/><stop offset="0.850" stop-color="#5d6f2c"/><stop offset="0.861" stop-color="#785e22"/><stop offset="0.941" stop-color="#7e2610"/><stop offset="1.000" stop-color="#7e2610"/></linearGradient><linearGradient id="g58" x1="0" y1="0" x2="0" y2="1"><stop offset="0.000" stop-color="#151432"/><stop offset="0.150" stop-color="#171a3d"/><stop offset="0.273" stop-color="#1c2a5c"/><stop offset="0.366" stop-color="#1e2f66"/><stop offset="0.586" stop-color="#2f5d43"/><stop offset="0.850" stop-color="#5d6f2c"/><stop offset="0.878" stop-color="#785e22"/><stop offset="0.958" stop-color="#7e2610"/><stop offset="1.000" stop-color="#7e2610"/></linearGradient><linearGradient id="g59" x1="0" y1="0" x2="0" y2="1"><stop offset="0.000" stop-color="#151532"/><stop offset="0.145" stop-color="#171b3e"/><stop offset="0.263" stop-color="#1c2a5c"/><stop offset="0.385" stop-color="#1e2f66"/><stop offset="0.605" stop-color="#2f5d43"/><stop offset="0.850" stop-color="#5d6f2c"/><stop offset="0.858" stop-color="#785e22"/><stop offset="0.938" stop-color="#802e12"/><stop offset="1.000" stop-color="#7e2610"/></linearGradient><linearGradient id="g60" x1="0" y1="0" x2="0" y2="1"><stop offset="0.000" stop-color="#151432"/><stop offset="0.149" stop-color="#171a3d"/><stop offset="0.270" stop-color="#1c2a5c"/><stop offset="0.410" stop-color="#1e2f66"/><stop offset="0.630" stop-color="#2f5d43"/><stop offset="0.850" stop-color="#5d6f2c"/><stop offset="0.871" stop-color="#785e22"/><stop offset="0.951" stop-color="#843b16"/><stop offset="1.000" stop-color="#7e2610"/></linearGradient><linearGradient id="g61" x1="0" y1="0" x2="0" y2="1"><stop offset="0.000" stop-color="#14122d"/><stop offset="0.186" stop-color="#161939"/><stop offset="0.338" stop-color="#1c295b"/><stop offset="0.435" stop-color="#1e2f66"/><stop offset="0.655" stop-color="#2f5d43"/><stop offset="0.850" stop-color="#5d6f2c"/><stop offset="0.850" stop-color="#785e22"/><stop offset="0.930" stop-color="#802e12"/><stop offset="1.000" stop-color="#7e2610"/></linearGradient><linearGradient id="g62" x1="0" y1="0" x2="0" y2="1"><stop offset="0.000" stop-color="#141129"/><stop offset="0.211" stop-color="#161737"/><stop offset="0.384" stop-color="#1c295a"/><stop offset="0.434" stop-color="#1e2f66"/><stop offset="0.576" stop-color="#2f5d43"/><stop offset="0.850" stop-color="#5d6f2c"/><stop offset="0.838" stop-color="#785e22"/><stop offset="0.918" stop-color="#7e2610"/><stop offset="1.000" stop-color="#7e2610"/></linearGradient><linearGradient id="g63" x1="0" y1="0" x2="0" y2="1"><stop offset="0.000" stop-color="#14112b"/><stop offset="0.203" stop-color="#161838"/><stop offset="0.368" stop-color="#1c295a"/><stop offset="0.431" stop-color="#1e2f66"/><stop offset="0.651" stop-color="#2f5d43"/><stop offset="0.850" stop-color="#5d6f2c"/><stop offset="0.843" stop-color="#785e22"/><stop offset="0.923" stop-color="#7e2610"/><stop offset="1.000" stop-color="#7e2610"/></linearGradient><linearGradient id="g64" x1="0" y1="0" x2="0" y2="1"><stop offset="0.000" stop-color="#130f27"/><stop offset="0.230" stop-color="#161635"/><stop offset="0.418" stop-color="#1c2959"/><stop offset="0.468" stop-color="#1e2f66"/><stop offset="0.575" stop-color="#2f5d43"/><stop offset="0.850" stop-color="#5d6f2c"/><stop offset="0.872" stop-color="#785e22"/><stop offset="0.952" stop-color="#7e2610"/><stop offset="1.000" stop-color="#7e2610"/></linearGradient><linearGradient id="g65" x1="0" y1="0" x2="0" y2="1"><stop offset="0.000" stop-color="#130f27"/><stop offset="0.230" stop-color="#161635"/><stop offset="0.418" stop-color="#1c2959"/><stop offset="0.468" stop-color="#1e2f66"/><stop offset="0.674" stop-color="#2f5d43"/><stop offset="0.850" stop-color="#5d6f2c"/><stop offset="0.856" stop-color="#785e22"/><stop offset="0.936" stop-color="#802e12"/><stop offset="1.000" stop-color="#7e2610"/></linearGradient><linearGradient id="g66" x1="0" y1="0" x2="0" y2="1"><stop offset="0.000" stop-color="#131027"/><stop offset="0.226" stop-color="#161735"/><stop offset="0.411" stop-color="#1c2959"/><stop offset="0.461" stop-color="#1e2f66"/><stop offset="0.640" stop-color="#2f5d43"/><stop offset="0.850" stop-color="#5d6f2c"/><stop offset="0.821" stop-color="#785e22"/><stop offset="0.901" stop-color="#7e2610"/><stop offset="1.000" stop-color="#7e2610"/></linearGradient><linearGradient id="g67" x1="0" y1="0" x2="0" y2="1"><stop offset="0.000" stop-color="#130f26"/><stop offset="0.236" stop-color="#151634"/><stop offset="0.430" stop-color="#1c2959"/><stop offset="0.480" stop-color="#1e2f66"/><stop offset="0.645" stop-color="#2f5d43"/><stop offset="0.850" stop-color="#5d6f2c"/><stop offset="0.874" stop-color="#785e22"/><stop offset="0.954" stop-color="#802e12"/><stop offset="1.000" stop-color="#7e2610"/></linearGradient><linearGradient id="g68" x1="0" y1="0" x2="0" y2="1"><stop offset="0.000" stop-color="#14112b"/><stop offset="0.200" stop-color="#161838"/><stop offset="0.364" stop-color="#1c295a"/><stop offset="0.414" stop-color="#1e2f66"/><stop offset="0.624" stop-color="#2f5d43"/><stop offset="0.850" stop-color="#5d6f2c"/><stop offset="0.871" stop-color="#785e22"/><stop offset="0.951" stop-color="#843b16"/><stop offset="1.000" stop-color="#7e2610"/></linearGradient><linearGradient id="g69" x1="0" y1="0" x2="0" y2="1"><stop offset="0.000" stop-color="#14112a"/><stop offset="0.206" stop-color="#161837"/><stop offset="0.374" stop-color="#1c295a"/><stop offset="0.424" stop-color="#1e2f66"/><stop offset="0.624" stop-color="#2f5d43"/><stop offset="0.850" stop-color="#5d6f2c"/><stop offset="0.859" stop-color="#785e22"/><stop offset="0.939" stop-color="#843b16"/><stop offset="1.000" stop-color="#7e2610"/></linearGradient><linearGradient id="g70" x1="0" y1="0" x2="0" y2="1"><stop offset="0.000" stop-color="#130f26"/><stop offset="0.234" stop-color="#151634"/><stop offset="0.425" stop-color="#1c2959"/><stop offset="0.475" stop-color="#1e2f66"/><stop offset="0.563" stop-color="#2f5d43"/><stop offset="0.850" stop-color="#5d6f2c"/><stop offset="0.833" stop-color="#785e22"/><stop offset="0.913" stop-color="#843b16"/><stop offset="1.000" stop-color="#7e2610"/></linearGradient><linearGradient id="g71" x1="0" y1="0" x2="0" y2="1"><stop offset="0.000" stop-color="#131028"/><stop offset="0.225" stop-color="#161735"/><stop offset="0.409" stop-color="#1c295a"/><stop offset="0.459" stop-color="#1e2f66"/><stop offset="0.612" stop-color="#2f5d43"/><stop offset="0.850" stop-color="#5d6f2c"/><stop offset="0.859" stop-color="#785e22"/><stop offset="0.939" stop-color="#843b16"/><stop offset="1.000" stop-color="#7e2610"/></linearGradient><linearGradient id="g72" x1="0" y1="0" x2="0" y2="1"><stop offset="0.000" stop-color="#14112a"/><stop offset="0.204" stop-color="#161838"/><stop offset="0.370" stop-color="#1c295a"/><stop offset="0.420" stop-color="#1e2f66"/><stop offset="0.620" stop-color="#2f5d43"/><stop offset="0.850" stop-color="#5d6f2c"/><stop offset="0.855" stop-color="#785e22"/><stop offset="0.935" stop-color="#802e12"/><stop offset="1.000" stop-color="#7e2610"/></linearGradient><linearGradient id="g73" x1="0" y1="0" x2="0" y2="1"><stop offset="0.000" stop-color="#141029"/><stop offset="0.215" stop-color="#161736"/><stop offset="0.390" stop-color="#1c295a"/><stop offset="0.440" stop-color="#1e2f66"/><stop offset="0.595" stop-color="#2f5d43"/><stop offset="0.850" stop-color="#5d6f2c"/><stop offset="0.857" stop-color="#785e22"/><stop offset="0.937" stop-color="#7e2610"/><stop offset="1.000" stop-color="#7e2610"/></linearGradient><linearGradient id="g74" x1="0" y1="0" x2="0" y2="1"><stop offset="0.000" stop-color="#14112b"/><stop offset="0.202" stop-color="#161838"/><stop offset="0.367" stop-color="#1c295a"/><stop offset="0.417" stop-color="#1e2f66"/><stop offset="0.565" stop-color="#2f5d43"/><stop offset="0.850" stop-color="#5d6f2c"/><stop offset="0.857" stop-color="#785e22"/><stop offset="0.937" stop-color="#7e2610"/><stop offset="1.000" stop-color="#7e2610"/></linearGradient><linearGradient id="g75" x1="0" y1="0" x2="0" y2="1"><stop offset="0.000" stop-color="#131028"/><stop offset="0.222" stop-color="#161736"/><stop offset="0.403" stop-color="#1c295a"/><stop offset="0.453" stop-color="#1e2f66"/><stop offset="0.638" stop-color="#2f5d43"/><stop offset="0.850" stop-color="#5d6f2c"/><stop offset="0.834" stop-color="#785e22"/><stop offset="0.914" stop-color="#7e2610"/><stop offset="1.000" stop-color="#7e2610"/></linearGradient><linearGradient id="g76" x1="0" y1="0" x2="0" y2="1"><stop offset="0.000" stop-color="#15132e"/><stop offset="0.178" stop-color="#17193a"/><stop offset="0.324" stop-color="#1c295b"/><stop offset="0.374" stop-color="#1e2f66"/><stop offset="0.550" stop-color="#2f5d43"/><stop offset="0.850" stop-color="#5d6f2c"/><stop offset="0.871" stop-color="#746224"/><stop offset="0.951" stop-color="#894c1b"/><stop offset="1.000" stop-color="#823314"/></linearGradient><linearGradient id="g77" x1="0" y1="0" x2="0" y2="1"><stop offset="0.000" stop-color="#14112a"/><stop offset="0.207" stop-color="#161737"/><stop offset="0.377" stop-color="#1c295a"/><stop offset="0.427" stop-color="#1e2f66"/><stop offset="0.592" stop-color="#2f5d43"/><stop offset="0.850" stop-color="#5d6f2c"/><stop offset="0.855" stop-color="#746224"/><stop offset="0.935" stop-color="#843b16"/><stop offset="1.000" stop-color="#823314"/></linearGradient><linearGradient id="g78" x1="0" y1="0" x2="0" y2="1"><stop offset="0.000" stop-color="#141029"/><stop offset="0.214" stop-color="#161736"/><stop offset="0.388" stop-color="#1c295a"/><stop offset="0.438" stop-color="#1e2f66"/><stop offset="0.654" stop-color="#2f5d43"/><stop offset="0.850" stop-color="#5d6f2c"/><stop offset="0.851" stop-color="#746224"/><stop offset="0.931" stop-color="#843b16"/><stop offset="1.000" stop-color="#823314"/></linearGradient><linearGradient id="g79" x1="0" y1="0" x2="0" y2="1"><stop offset="0.000" stop-color="#15132e"/><stop offset="0.178" stop-color="#17193a"/><stop offset="0.324" stop-color="#1c295b"/><stop offset="0.438" stop-color="#1e2f66"/><stop offset="0.658" stop-color="#2f5d43"/><stop offset="0.850" stop-color="#5d6f2c"/><stop offset="0.908" stop-color="#746224"/><stop offset="0.988" stop-color="#864318"/><stop offset="1.000" stop-color="#823314"/></linearGradient><linearGradient id="g80" x1="0" y1="0" x2="0" y2="1"><stop offset="0.000" stop-color="#141129"/><stop offset="0.212" stop-color="#161737"/><stop offset="0.385" stop-color="#1c295a"/><stop offset="0.435" stop-color="#1e2f66"/><stop offset="0.569" stop-color="#2f5d43"/><stop offset="0.850" stop-color="#5d6f2c"/><stop offset="0.902" stop-color="#746224"/><stop offset="0.982" stop-color="#864318"/><stop offset="1.000" stop-color="#823314"/></linearGradient><linearGradient id="g81" x1="0" y1="0" x2="0" y2="1"><stop offset="0.000" stop-color="#131028"/><stop offset="0.225" stop-color="#161735"/><stop offset="0.409" stop-color="#1c295a"/><stop offset="0.459" stop-color="#1e2f66"/><stop offset="0.663" stop-color="#2f5d43"/><stop offset="0.850" stop-color="#5d6f2c"/><stop offset="0.851" stop-color="#746224"/><stop offset="0.931" stop-color="#802e12"/><stop offset="1.000" stop-color="#823314"/></linearGradient><linearGradient id="g82" x1="0" y1="0" x2="0" y2="1"><stop offset="0.000" stop-color="#131028"/><stop offset="0.225" stop-color="#161735"/><stop offset="0.409" stop-color="#1c295a"/><stop offset="0.459" stop-color="#1e2f66"/><stop offset="0.617" stop-color="#2f5d43"/><stop offset="0.850" stop-color="#5d6f2c"/><stop offset="0.869" stop-color="#746224"/><stop offset="0.949" stop-color="#843b16"/><stop offset="1.000" stop-color="#823314"/></linearGradient><linearGradient id="g83" x1="0" y1="0" x2="0" y2="1"><stop offset="0.000" stop-color="#14122d"/><stop offset="0.188" stop-color="#161839"/><stop offset="0.342" stop-color="#1c295b"/><stop offset="0.441" stop-color="#1e2f66"/><stop offset="0.661" stop-color="#2f5d43"/><stop offset="0.850" stop-color="#5d6f2c"/><stop offset="0.841" stop-color="#746224"/><stop offset="0.921" stop-color="#802e12"/><stop offset="1.000" stop-color="#823314"/></linearGradient><linearGradient id="g84" x1="0" y1="0" x2="0" y2="1"><stop offset="0.000" stop-color="#14122c"/><stop offset="0.195" stop-color="#161838"/><stop offset="0.354" stop-color="#1c295a"/><stop offset="0.404" stop-color="#1e2f66"/><stop offset="0.582" stop-color="#2f5d43"/><stop offset="0.850" stop-color="#5d6f2c"/><stop offset="0.863" stop-color="#746224"/><stop offset="0.943" stop-color="#843b16"/><stop offset="1.000" stop-color="#823314"/></linearGradient><linearGradient id="g85" x1="0" y1="0" x2="0" y2="1"><stop offset="0.000" stop-color="#131027"/><stop offset="0.226" stop-color="#161735"/><stop offset="0.411" stop-color="#1c2959"/><stop offset="0.618" stop-color="#1e2f66"/><stop offset="0.800" stop-color="#2f5d43"/><stop offset="0.850" stop-color="#5d6f2c"/><stop offset="0.909" stop-color="#746224"/><stop offset="0.989" stop-color="#864318"/><stop offset="1.000" stop-color="#823314"/></linearGradient><linearGradient id="g86" x1="0" y1="0" x2="0" y2="1"><stop offset="0.000" stop-color="#130f26"/><stop offset="0.251" stop-color="#151634"/><stop offset="0.457" stop-color="#1c2959"/><stop offset="0.623" stop-color="#1e2f66"/><stop offset="0.800" stop-color="#2f5d43"/><stop offset="0.850" stop-color="#5d6f2c"/><stop offset="0.859" stop-color="#746224"/><stop offset="0.939" stop-color="#894c1b"/><stop offset="1.000" stop-color="#823314"/></linearGradient><linearGradient id="g87" x1="0" y1="0" x2="0" y2="1"><stop offset="0.000" stop-color="#130f26"/><stop offset="0.248" stop-color="#151634"/><stop offset="0.451" stop-color="#1c2959"/><stop offset="0.632" stop-color="#1e2f66"/><stop offset="0.800" stop-color="#2f5d43"/><stop offset="0.850" stop-color="#5d6f2c"/><stop offset="0.893" stop-color="#746224"/><stop offset="0.973" stop-color="#802e12"/><stop offset="1.000" stop-color="#823314"/></linearGradient><linearGradient id="g88" x1="0" y1="0" x2="0" y2="1"><stop offset="0.000" stop-color="#130f26"/><stop offset="0.245" stop-color="#151634"/><stop offset="0.445" stop-color="#1c2959"/><stop offset="0.691" stop-color="#1e2f66"/><stop offset="0.800" stop-color="#2f5d43"/><stop offset="0.850" stop-color="#5d6f2c"/><stop offset="0.906" stop-color="#746224"/><stop offset="0.986" stop-color="#802e12"/><stop offset="1.000" stop-color="#823314"/></linearGradient><linearGradient id="g89" x1="0" y1="0" x2="0" y2="1"><stop offset="0.000" stop-color="#130f26"/><stop offset="0.261" stop-color="#151634"/><stop offset="0.474" stop-color="#1c2959"/><stop offset="0.617" stop-color="#1e2f66"/><stop offset="0.800" stop-color="#2f5d43"/><stop offset="0.850" stop-color="#5d6f2c"/><stop offset="0.880" stop-color="#746224"/><stop offset="0.960" stop-color="#843b16"/><stop offset="1.000" stop-color="#823314"/></linearGradient><linearGradient id="g90" x1="0" y1="0" x2="0" y2="1"><stop offset="0.000" stop-color="#130f26"/><stop offset="0.257" stop-color="#151634"/><stop offset="0.466" stop-color="#1c2959"/><stop offset="0.516" stop-color="#1e2f66"/><stop offset="0.728" stop-color="#2f5d43"/><stop offset="0.850" stop-color="#5d6f2c"/><stop offset="0.888" stop-color="#746224"/><stop offset="0.968" stop-color="#802e12"/><stop offset="1.000" stop-color="#823314"/></linearGradient><linearGradient id="g91" x1="0" y1="0" x2="0" y2="1"><stop offset="0.000" stop-color="#130f26"/><stop offset="0.300" stop-color="#151634"/><stop offset="0.545" stop-color="#1c2959"/><stop offset="0.595" stop-color="#1e2f66"/><stop offset="0.748" stop-color="#2f5d43"/><stop offset="0.850" stop-color="#5d6f2c"/><stop offset="0.841" stop-color="#746224"/><stop offset="0.921" stop-color="#894c1b"/><stop offset="1.000" stop-color="#823314"/></linearGradient><linearGradient id="g92" x1="0" y1="0" x2="0" y2="1"><stop offset="0.000" stop-color="#130f26"/><stop offset="0.294" stop-color="#151634"/><stop offset="0.534" stop-color="#1c2959"/><stop offset="0.584" stop-color="#1e2f66"/><stop offset="0.720" stop-color="#2f5d43"/><stop offset="0.850" stop-color="#5d6f2c"/><stop offset="0.900" stop-color="#746224"/><stop offset="0.980" stop-color="#894c1b"/><stop offset="1.000" stop-color="#823314"/></linearGradient><linearGradient id="g93" x1="0" y1="0" x2="0" y2="1"><stop offset="0.000" stop-color="#130f26"/><stop offset="0.263" stop-color="#151634"/><stop offset="0.479" stop-color="#1c2959"/><stop offset="0.529" stop-color="#1e2f66"/><stop offset="0.719" stop-color="#2f5d43"/><stop offset="0.850" stop-color="#5d6f2c"/><stop offset="0.841" stop-color="#746224"/><stop offset="0.921" stop-color="#802e12"/><stop offset="1.000" stop-color="#823314"/></linearGradient><linearGradient id="g94" x1="0" y1="0" x2="0" y2="1"><stop offset="0.000" stop-color="#130f26"/><stop offset="0.299" stop-color="#151634"/><stop offset="0.543" stop-color="#1c2959"/><stop offset="0.593" stop-color="#1e2f66"/><stop offset="0.731" stop-color="#2f5d43"/><stop offset="0.850" stop-color="#5d6f2c"/><stop offset="0.849" stop-color="#746224"/><stop offset="0.929" stop-color="#864318"/><stop offset="1.000" stop-color="#823314"/></linearGradient><linearGradient id="g95" x1="0" y1="0" x2="0" y2="1"><stop offset="0.000" stop-color="#130f26"/><stop offset="0.299" stop-color="#151634"/><stop offset="0.543" stop-color="#1c2959"/><stop offset="0.593" stop-color="#1e2f66"/><stop offset="0.800" stop-color="#2f5d43"/><stop offset="0.850" stop-color="#5d6f2c"/><stop offset="0.858" stop-color="#746224"/><stop offset="0.938" stop-color="#864318"/><stop offset="1.000" stop-color="#823314"/></linearGradient><linearGradient id="g96" x1="0" y1="0" x2="0" y2="1"><stop offset="0.000" stop-color="#130f26"/><stop offset="0.257" stop-color="#151634"/><stop offset="0.467" stop-color="#1c2959"/><stop offset="0.517" stop-color="#1e2f66"/><stop offset="0.725" stop-color="#2f5d43"/><stop offset="0.850" stop-color="#5d6f2c"/><stop offset="0.861" stop-color="#746224"/><stop offset="0.941" stop-color="#864318"/><stop offset="1.000" stop-color="#823314"/></linearGradient><linearGradient id="g97" x1="0" y1="0" x2="0" y2="1"><stop offset="0.000" stop-color="#130f26"/><stop offset="0.261" stop-color="#151634"/><stop offset="0.475" stop-color="#1c2959"/><stop offset="0.525" stop-color="#1e2f66"/><stop offset="0.742" stop-color="#2f5d43"/><stop offset="0.850" stop-color="#5d6f2c"/><stop offset="0.852" stop-color="#746224"/><stop offset="0.932" stop-color="#843b16"/><stop offset="1.000" stop-color="#823314"/></linearGradient><linearGradient id="g98" x1="0" y1="0" x2="0" y2="1"><stop offset="0.000" stop-color="#130f26"/><stop offset="0.288" stop-color="#151634"/><stop offset="0.524" stop-color="#1c2959"/><stop offset="0.575" stop-color="#1e2f66"/><stop offset="0.795" stop-color="#2f5d43"/><stop offset="0.850" stop-color="#5d6f2c"/><stop offset="0.843" stop-color="#746224"/><stop offset="0.923" stop-color="#894c1b"/><stop offset="1.000" stop-color="#823314"/></linearGradient><linearGradient id="g99" x1="0" y1="0" x2="0" y2="1"><stop offset="0.000" stop-color="#130f26"/><stop offset="0.283" stop-color="#151634"/><stop offset="0.515" stop-color="#1c2959"/><stop offset="0.565" stop-color="#1e2f66"/><stop offset="0.736" stop-color="#2f5d43"/><stop offset="0.850" stop-color="#5d6f2c"/><stop offset="0.853" stop-color="#746224"/><stop offset="0.933" stop-color="#802e12"/><stop offset="1.000" stop-color="#823314"/></linearGradient><linearGradient id="g100" x1="0" y1="0" x2="0" y2="1"><stop offset="0.000" stop-color="#130f26"/><stop offset="0.256" stop-color="#151634"/><stop offset="0.465" stop-color="#1c2959"/><stop offset="0.515" stop-color="#1e2f66"/><stop offset="0.718" stop-color="#2f5d43"/><stop offset="0.850" stop-color="#5d6f2c"/><stop offset="0.886" stop-color="#746224"/><stop offset="0.966" stop-color="#802e12"/><stop offset="1.000" stop-color="#823314"/></linearGradient><linearGradient id="g101" x1="0" y1="0" x2="0" y2="1"><stop offset="0.000" stop-color="#130f26"/><stop offset="0.277" stop-color="#151634"/><stop offset="0.504" stop-color="#1c2959"/><stop offset="0.554" stop-color="#1e2f66"/><stop offset="0.724" stop-color="#2f5d43"/><stop offset="0.850" stop-color="#5d6f2c"/><stop offset="0.902" stop-color="#746224"/><stop offset="0.982" stop-color="#843b16"/><stop offset="1.000" stop-color="#823314"/></linearGradient><linearGradient id="g102" x1="0" y1="0" x2="0" y2="1"><stop offset="0.000" stop-color="#130f26"/><stop offset="0.278" stop-color="#151634"/><stop offset="0.506" stop-color="#1c2959"/><stop offset="0.556" stop-color="#1e2f66"/><stop offset="0.771" stop-color="#2f5d43"/><stop offset="0.850" stop-color="#5d6f2c"/><stop offset="0.864" stop-color="#746224"/><stop offset="0.944" stop-color="#864318"/><stop offset="1.000" stop-color="#823314"/></linearGradient><linearGradient id="g103" x1="0" y1="0" x2="0" y2="1"><stop offset="0.000" stop-color="#130f26"/><stop offset="0.262" stop-color="#151634"/><stop offset="0.476" stop-color="#1c2959"/><stop offset="0.526" stop-color="#1e2f66"/><stop offset="0.689" stop-color="#2f5d43"/><stop offset="0.850" stop-color="#5d6f2c"/><stop offset="0.844" stop-color="#746224"/><stop offset="0.924" stop-color="#864318"/><stop offset="1.000" stop-color="#823314"/></linearGradient><linearGradient id="g104" x1="0" y1="0" x2="0" y2="1"><stop offset="0.000" stop-color="#130f26"/><stop offset="0.239" stop-color="#151634"/><stop offset="0.435" stop-color="#1c2959"/><stop offset="0.497" stop-color="#1e2f66"/><stop offset="0.717" stop-color="#2f5d43"/><stop offset="0.850" stop-color="#5d6f2c"/><stop offset="0.902" stop-color="#746224"/><stop offset="0.982" stop-color="#802e12"/><stop offset="1.000" stop-color="#823314"/></linearGradient><linearGradient id="g105" x1="0" y1="0" x2="0" y2="1"><stop offset="0.000" stop-color="#130f26"/><stop offset="0.247" stop-color="#151634"/><stop offset="0.448" stop-color="#1c2959"/><stop offset="0.498" stop-color="#1e2f66"/><stop offset="0.646" stop-color="#2f5d43"/><stop offset="0.850" stop-color="#5d6f2c"/><stop offset="0.899" stop-color="#746224"/><stop offset="0.979" stop-color="#843b16"/><stop offset="1.000" stop-color="#823314"/></linearGradient><linearGradient id="g106" x1="0" y1="0" x2="0" y2="1"><stop offset="0.000" stop-color="#130f26"/><stop offset="0.270" stop-color="#151634"/><stop offset="0.490" stop-color="#1c2959"/><stop offset="0.540" stop-color="#1e2f66"/><stop offset="0.714" stop-color="#2f5d43"/><stop offset="0.850" stop-color="#5d6f2c"/><stop offset="0.843" stop-color="#746224"/><stop offset="0.923" stop-color="#864318"/><stop offset="1.000" stop-color="#823314"/></linearGradient><linearGradient id="g107" x1="0" y1="0" x2="0" y2="1"><stop offset="0.000" stop-color="#130f26"/><stop offset="0.244" stop-color="#151634"/><stop offset="0.444" stop-color="#1c2959"/><stop offset="0.494" stop-color="#1e2f66"/><stop offset="0.685" stop-color="#2f5d43"/><stop offset="0.850" stop-color="#5d6f2c"/><stop offset="0.858" stop-color="#746224"/><stop offset="0.938" stop-color="#843b16"/><stop offset="1.000" stop-color="#823314"/></linearGradient><linearGradient id="g108" x1="0" y1="0" x2="0" y2="1"><stop offset="0.000" stop-color="#130f26"/><stop offset="0.288" stop-color="#151634"/><stop offset="0.523" stop-color="#1c2959"/><stop offset="0.573" stop-color="#1e2f66"/><stop offset="0.700" stop-color="#2f5d43"/><stop offset="0.850" stop-color="#5d6f2c"/><stop offset="0.857" stop-color="#746224"/><stop offset="0.937" stop-color="#843b16"/><stop offset="1.000" stop-color="#823314"/></linearGradient><linearGradient id="g109" x1="0" y1="0" x2="0" y2="1"><stop offset="0.000" stop-color="#130f26"/><stop offset="0.245" stop-color="#151634"/><stop offset="0.445" stop-color="#1c2959"/><stop offset="0.495" stop-color="#1e2f66"/><stop offset="0.658" stop-color="#2f5d43"/><stop offset="0.850" stop-color="#5d6f2c"/><stop offset="0.863" stop-color="#746224"/><stop offset="0.943" stop-color="#894c1b"/><stop offset="1.000" stop-color="#823314"/></linearGradient><linearGradient id="g110" x1="0" y1="0" x2="0" y2="1"><stop offset="0.000" stop-color="#130f26"/><stop offset="0.258" stop-color="#151634"/><stop offset="0.469" stop-color="#1c2959"/><stop offset="0.519" stop-color="#1e2f66"/><stop offset="0.699" stop-color="#2f5d43"/><stop offset="0.850" stop-color="#5d6f2c"/><stop offset="0.854" stop-color="#746224"/><stop offset="0.934" stop-color="#894c1b"/><stop offset="1.000" stop-color="#823314"/></linearGradient><linearGradient id="g111" x1="0" y1="0" x2="0" y2="1"><stop offset="0.000" stop-color="#130f26"/><stop offset="0.236" stop-color="#151634"/><stop offset="0.428" stop-color="#1c2959"/><stop offset="0.519" stop-color="#1e2f66"/><stop offset="0.739" stop-color="#2f5d43"/><stop offset="0.850" stop-color="#5d6f2c"/><stop offset="0.850" stop-color="#746224"/><stop offset="0.930" stop-color="#894c1b"/><stop offset="1.000" stop-color="#823314"/></linearGradient><linearGradient id="g112" x1="0" y1="0" x2="0" y2="1"><stop offset="0.000" stop-color="#130f26"/><stop offset="0.251" stop-color="#151634"/><stop offset="0.456" stop-color="#1c2959"/><stop offset="0.506" stop-color="#1e2f66"/><stop offset="0.679" stop-color="#2f5d43"/><stop offset="0.850" stop-color="#5d6f2c"/><stop offset="0.884" stop-color="#746224"/><stop offset="0.964" stop-color="#894c1b"/><stop offset="1.000" stop-color="#823314"/></linearGradient><linearGradient id="g113" x1="0" y1="0" x2="0" y2="1"><stop offset="0.000" stop-color="#130f26"/><stop offset="0.260" stop-color="#151634"/><stop offset="0.473" stop-color="#1c2959"/><stop offset="0.523" stop-color="#1e2f66"/><stop offset="0.709" stop-color="#2f5d43"/><stop offset="0.850" stop-color="#5d6f2c"/><stop offset="0.893" stop-color="#746224"/><stop offset="0.973" stop-color="#802e12"/><stop offset="1.000" stop-color="#823314"/></linearGradient><linearGradient id="g114" x1="0" y1="0" x2="0" y2="1"><stop offset="0.000" stop-color="#130f26"/><stop offset="0.269" stop-color="#151634"/><stop offset="0.489" stop-color="#1c2959"/><stop offset="0.539" stop-color="#1e2f66"/><stop offset="0.734" stop-color="#2f5d43"/><stop offset="0.850" stop-color="#5d6f2c"/><stop offset="0.875" stop-color="#746224"/><stop offset="0.955" stop-color="#843b16"/><stop offset="1.000" stop-color="#823314"/></linearGradient><linearGradient id="g115" x1="0" y1="0" x2="0" y2="1"><stop offset="0.000" stop-color="#130f26"/><stop offset="0.265" stop-color="#151634"/><stop offset="0.483" stop-color="#1c2959"/><stop offset="0.533" stop-color="#1e2f66"/><stop offset="0.727" stop-color="#2f5d43"/><stop offset="0.850" stop-color="#5d6f2c"/><stop offset="0.843" stop-color="#746224"/><stop offset="0.923" stop-color="#802e12"/><stop offset="1.000" stop-color="#823314"/></linearGradient><linearGradient id="g116" x1="0" y1="0" x2="0" y2="1"><stop offset="0.000" stop-color="#130f26"/><stop offset="0.267" stop-color="#151634"/><stop offset="0.486" stop-color="#1c2959"/><stop offset="0.536" stop-color="#1e2f66"/><stop offset="0.750" stop-color="#2f5d43"/><stop offset="0.850" stop-color="#5d6f2c"/><stop offset="0.850" stop-color="#746224"/><stop offset="0.930" stop-color="#894c1b"/><stop offset="1.000" stop-color="#823314"/></linearGradient><linearGradient id="g117" x1="0" y1="0" x2="0" y2="1"><stop offset="0.000" stop-color="#130f26"/><stop offset="0.274" stop-color="#151634"/><stop offset="0.497" stop-color="#1c2959"/><stop offset="0.547" stop-color="#1e2f66"/><stop offset="0.726" stop-color="#2f5d43"/><stop offset="0.850" stop-color="#5d6f2c"/><stop offset="0.902" stop-color="#746224"/><stop offset="0.982" stop-color="#864318"/><stop offset="1.000" stop-color="#823314"/></linearGradient><linearGradient id="g118" x1="0" y1="0" x2="0" y2="1"><stop offset="0.000" stop-color="#130f26"/><stop offset="0.234" stop-color="#151634"/><stop offset="0.426" stop-color="#1c2959"/><stop offset="0.476" stop-color="#1e2f66"/><stop offset="0.664" stop-color="#2f5d43"/><stop offset="0.850" stop-color="#5d6f2c"/><stop offset="0.885" stop-color="#746224"/><stop offset="0.965" stop-color="#894c1b"/><stop offset="1.000" stop-color="#823314"/></linearGradient><linearGradient id="g119" x1="0" y1="0" x2="0" y2="1"><stop offset="0.000" stop-color="#130f26"/><stop offset="0.252" stop-color="#151634"/><stop offset="0.457" stop-color="#1c2959"/><stop offset="0.507" stop-color="#1e2f66"/><stop offset="0.716" stop-color="#2f5d43"/><stop offset="0.850" stop-color="#5d6f2c"/><stop offset="0.844" stop-color="#746224"/><stop offset="0.924" stop-color="#894c1b"/><stop offset="1.000" stop-color="#823314"/></linearGradient><linearGradient id="g120" x1="0" y1="0" x2="0" y2="1"><stop offset="0.000" stop-color="#130f26"/><stop offset="0.267" stop-color="#151634"/><stop offset="0.485" stop-color="#1c2959"/><stop offset="0.535" stop-color="#1e2f66"/><stop offset="0.746" stop-color="#2f5d43"/><stop offset="0.850" stop-color="#5d6f2c"/><stop offset="0.874" stop-color="#746224"/><stop offset="0.954" stop-color="#894c1b"/><stop offset="1.000" stop-color="#823314"/></linearGradient><linearGradient id="g121" x1="0" y1="0" x2="0" y2="1"><stop offset="0.000" stop-color="#130f26"/><stop offset="0.259" stop-color="#151634"/><stop offset="0.470" stop-color="#1c2959"/><stop offset="0.520" stop-color="#1e2f66"/><stop offset="0.676" stop-color="#2f5d43"/><stop offset="0.850" stop-color="#5d6f2c"/><stop offset="0.905" stop-color="#746224"/><stop offset="0.985" stop-color="#894c1b"/><stop offset="1.000" stop-color="#823314"/></linearGradient><linearGradient id="g122" x1="0" y1="0" x2="0" y2="1"><stop offset="0.000" stop-color="#130f26"/><stop offset="0.271" stop-color="#151634"/><stop offset="0.493" stop-color="#1c2959"/><stop offset="0.543" stop-color="#1e2f66"/><stop offset="0.679" stop-color="#2f5d43"/><stop offset="0.850" stop-color="#5d6f2c"/><stop offset="0.892" stop-color="#746224"/><stop offset="0.972" stop-color="#843b16"/><stop offset="1.000" stop-color="#823314"/></linearGradient><linearGradient id="g123" x1="0" y1="0" x2="0" y2="1"><stop offset="0.000" stop-color="#130f26"/><stop offset="0.281" stop-color="#151634"/><stop offset="0.511" stop-color="#1c2959"/><stop offset="0.561" stop-color="#1e2f66"/><stop offset="0.775" stop-color="#2f5d43"/><stop offset="0.850" stop-color="#5d6f2c"/><stop offset="0.856" stop-color="#746224"/><stop offset="0.936" stop-color="#864318"/><stop offset="1.000" stop-color="#823314"/></linearGradient><linearGradient id="g124" x1="0" y1="0" x2="0" y2="1"><stop offset="0.000" stop-color="#130f26"/><stop offset="0.250" stop-color="#151634"/><stop offset="0.455" stop-color="#1c2959"/><stop offset="0.535" stop-color="#1e2f66"/><stop offset="0.755" stop-color="#2f5d43"/><stop offset="0.850" stop-color="#5d6f2c"/><stop offset="0.872" stop-color="#746224"/><stop offset="0.952" stop-color="#802e12"/><stop offset="1.000" stop-color="#823314"/></linearGradient><linearGradient id="g125" x1="0" y1="0" x2="0" y2="1"><stop offset="0.000" stop-color="#130f26"/><stop offset="0.243" stop-color="#151634"/><stop offset="0.442" stop-color="#1c2959"/><stop offset="0.569" stop-color="#1e2f66"/><stop offset="0.789" stop-color="#2f5d43"/><stop offset="0.850" stop-color="#5d6f2c"/><stop offset="0.860" stop-color="#746224"/><stop offset="0.940" stop-color="#894c1b"/><stop offset="1.000" stop-color="#823314"/></linearGradient><linearGradient id="g126" x1="0" y1="0" x2="0" y2="1"><stop offset="0.000" stop-color="#130f26"/><stop offset="0.274" stop-color="#151634"/><stop offset="0.499" stop-color="#1c2959"/><stop offset="0.549" stop-color="#1e2f66"/><stop offset="0.760" stop-color="#2f5d43"/><stop offset="0.850" stop-color="#5d6f2c"/><stop offset="0.845" stop-color="#746224"/><stop offset="0.925" stop-color="#864318"/><stop offset="1.000" stop-color="#823314"/></linearGradient><linearGradient id="g127" x1="0" y1="0" x2="0" y2="1"><stop offset="0.000" stop-color="#130f26"/><stop offset="0.260" stop-color="#151634"/><stop offset="0.473" stop-color="#1c2959"/><stop offset="0.544" stop-color="#1e2f66"/><stop offset="0.764" stop-color="#2f5d43"/><stop offset="0.850" stop-color="#5d6f2c"/><stop offset="0.889" stop-color="#746224"/><stop offset="0.969" stop-color="#864318"/><stop offset="1.000" stop-color="#823314"/></linearGradient><linearGradient id="g128" x1="0" y1="0" x2="0" y2="1"><stop offset="0.000" stop-color="#130f26"/><stop offset="0.244" stop-color="#151634"/><stop offset="0.443" stop-color="#1c2959"/><stop offset="0.493" stop-color="#1e2f66"/><stop offset="0.696" stop-color="#2f5d43"/><stop offset="0.850" stop-color="#5d6f2c"/><stop offset="0.859" stop-color="#746224"/><stop offset="0.939" stop-color="#894c1b"/><stop offset="1.000" stop-color="#823314"/></linearGradient><linearGradient id="g129" x1="0" y1="0" x2="0" y2="1"><stop offset="0.000" stop-color="#130f26"/><stop offset="0.283" stop-color="#151634"/><stop offset="0.514" stop-color="#1c2959"/><stop offset="0.564" stop-color="#1e2f66"/><stop offset="0.773" stop-color="#2f5d43"/><stop offset="0.850" stop-color="#5d6f2c"/><stop offset="0.860" stop-color="#746224"/><stop offset="0.940" stop-color="#843b16"/><stop offset="1.000" stop-color="#823314"/></linearGradient><linearGradient id="g130" x1="0" y1="0" x2="0" y2="1"><stop offset="0.000" stop-color="#130f26"/><stop offset="0.272" stop-color="#151634"/><stop offset="0.494" stop-color="#1c2959"/><stop offset="0.544" stop-color="#1e2f66"/><stop offset="0.751" stop-color="#2f5d43"/><stop offset="0.850" stop-color="#5d6f2c"/><stop offset="0.848" stop-color="#746224"/><stop offset="0.928" stop-color="#864318"/><stop offset="1.000" stop-color="#823314"/></linearGradient><linearGradient id="g131" x1="0" y1="0" x2="0" y2="1"><stop offset="0.000" stop-color="#130f26"/><stop offset="0.265" stop-color="#151634"/><stop offset="0.481" stop-color="#1c2959"/><stop offset="0.531" stop-color="#1e2f66"/><stop offset="0.708" stop-color="#2f5d43"/><stop offset="0.850" stop-color="#5d6f2c"/><stop offset="0.873" stop-color="#746224"/><stop offset="0.953" stop-color="#843b16"/><stop offset="1.000" stop-color="#823314"/></linearGradient><linearGradient id="g132" x1="0" y1="0" x2="0" y2="1"><stop offset="0.000" stop-color="#130f26"/><stop offset="0.274" stop-color="#151634"/><stop offset="0.498" stop-color="#1c2959"/><stop offset="0.579" stop-color="#1e2f66"/><stop offset="0.799" stop-color="#2f5d43"/><stop offset="0.850" stop-color="#5d6f2c"/><stop offset="0.908" stop-color="#746224"/><stop offset="0.988" stop-color="#802e12"/><stop offset="1.000" stop-color="#823314"/></linearGradient><linearGradient id="g133" x1="0" y1="0" x2="0" y2="1"><stop offset="0.000" stop-color="#130f26"/><stop offset="0.305" stop-color="#151634"/><stop offset="0.554" stop-color="#1c2959"/><stop offset="0.604" stop-color="#1e2f66"/><stop offset="0.750" stop-color="#2f5d43"/><stop offset="0.850" stop-color="#5d6f2c"/><stop offset="0.904" stop-color="#746224"/><stop offset="0.984" stop-color="#864318"/><stop offset="1.000" stop-color="#823314"/></linearGradient><linearGradient id="g134" x1="0" y1="0" x2="0" y2="1"><stop offset="0.000" stop-color="#130f26"/><stop offset="0.256" stop-color="#151634"/><stop offset="0.465" stop-color="#1c2959"/><stop offset="0.515" stop-color="#1e2f66"/><stop offset="0.718" stop-color="#2f5d43"/><stop offset="0.850" stop-color="#5d6f2c"/><stop offset="0.892" stop-color="#746224"/><stop offset="0.972" stop-color="#843b16"/><stop offset="1.000" stop-color="#823314"/></linearGradient><linearGradient id="g135" x1="0" y1="0" x2="0" y2="1"><stop offset="0.000" stop-color="#130f26"/><stop offset="0.305" stop-color="#151634"/><stop offset="0.555" stop-color="#1c2959"/><stop offset="0.605" stop-color="#1e2f66"/><stop offset="0.726" stop-color="#2f5d43"/><stop offset="0.850" stop-color="#5d6f2c"/><stop offset="0.897" stop-color="#746224"/><stop offset="0.977" stop-color="#843b16"/><stop offset="1.000" stop-color="#823314"/></linearGradient><linearGradient id="g136" x1="0" y1="0" x2="0" y2="1"><stop offset="0.000" stop-color="#130f26"/><stop offset="0.301" stop-color="#151634"/><stop offset="0.547" stop-color="#1c2959"/><stop offset="0.597" stop-color="#1e2f66"/><stop offset="0.793" stop-color="#2f5d43"/><stop offset="0.850" stop-color="#5d6f2c"/><stop offset="0.856" stop-color="#746224"/><stop offset="0.936" stop-color="#802e12"/><stop offset="1.000" stop-color="#823314"/></linearGradient><linearGradient id="g137" x1="0" y1="0" x2="0" y2="1"><stop offset="0.000" stop-color="#130f26"/><stop offset="0.273" stop-color="#151634"/><stop offset="0.496" stop-color="#1c2959"/><stop offset="0.546" stop-color="#1e2f66"/><stop offset="0.727" stop-color="#2f5d43"/><stop offset="0.850" stop-color="#5d6f2c"/><stop offset="0.906" stop-color="#746224"/><stop offset="0.986" stop-color="#802e12"/><stop offset="1.000" stop-color="#823314"/></linearGradient><linearGradient id="g138" x1="0" y1="0" x2="0" y2="1"><stop offset="0.000" stop-color="#130f26"/><stop offset="0.272" stop-color="#151634"/><stop offset="0.495" stop-color="#1c2959"/><stop offset="0.574" stop-color="#1e2f66"/><stop offset="0.794" stop-color="#2f5d43"/><stop offset="0.850" stop-color="#5d6f2c"/><stop offset="0.869" stop-color="#746224"/><stop offset="0.949" stop-color="#802e12"/><stop offset="1.000" stop-color="#823314"/></linearGradient><linearGradient id="g139" x1="0" y1="0" x2="0" y2="1"><stop offset="0.000" stop-color="#130f26"/><stop offset="0.266" stop-color="#151634"/><stop offset="0.484" stop-color="#1c2959"/><stop offset="0.586" stop-color="#1e2f66"/><stop offset="0.800" stop-color="#2f5d43"/><stop offset="0.850" stop-color="#5d6f2c"/><stop offset="0.840" stop-color="#746224"/><stop offset="0.920" stop-color="#843b16"/><stop offset="1.000" stop-color="#823314"/></linearGradient><linearGradient id="g140" x1="0" y1="0" x2="0" y2="1"><stop offset="0.000" stop-color="#130f26"/><stop offset="0.294" stop-color="#151634"/><stop offset="0.535" stop-color="#1c2959"/><stop offset="0.585" stop-color="#1e2f66"/><stop offset="0.719" stop-color="#2f5d43"/><stop offset="0.850" stop-color="#5d6f2c"/><stop offset="0.905" stop-color="#746224"/><stop offset="0.985" stop-color="#894c1b"/><stop offset="1.000" stop-color="#823314"/></linearGradient><linearGradient id="g141" x1="0" y1="0" x2="0" y2="1"><stop offset="0.000" stop-color="#130f26"/><stop offset="0.297" stop-color="#151634"/><stop offset="0.539" stop-color="#1c2959"/><stop offset="0.589" stop-color="#1e2f66"/><stop offset="0.738" stop-color="#2f5d43"/><stop offset="0.850" stop-color="#5d6f2c"/><stop offset="0.866" stop-color="#746224"/><stop offset="0.946" stop-color="#802e12"/><stop offset="1.000" stop-color="#823314"/></linearGradient><linearGradient id="g142" x1="0" y1="0" x2="0" y2="1"><stop offset="0.000" stop-color="#130f26"/><stop offset="0.267" stop-color="#151634"/><stop offset="0.486" stop-color="#1c2959"/><stop offset="0.587" stop-color="#1e2f66"/><stop offset="0.800" stop-color="#2f5d43"/><stop offset="0.850" stop-color="#5d6f2c"/><stop offset="0.845" stop-color="#746224"/><stop offset="0.925" stop-color="#802e12"/><stop offset="1.000" stop-color="#823314"/></linearGradient><linearGradient id="g143" x1="0" y1="0" x2="0" y2="1"><stop offset="0.000" stop-color="#130f26"/><stop offset="0.287" stop-color="#151634"/><stop offset="0.521" stop-color="#1c2959"/><stop offset="0.584" stop-color="#1e2f66"/><stop offset="0.800" stop-color="#2f5d43"/><stop offset="0.850" stop-color="#5d6f2c"/><stop offset="0.860" stop-color="#746224"/><stop offset="0.940" stop-color="#894c1b"/><stop offset="1.000" stop-color="#823314"/></linearGradient><linearGradient id="g144" x1="0" y1="0" x2="0" y2="1"><stop offset="0.000" stop-color="#130f26"/><stop offset="0.290" stop-color="#151634"/><stop offset="0.527" stop-color="#1c2959"/><stop offset="0.577" stop-color="#1e2f66"/><stop offset="0.734" stop-color="#2f5d43"/><stop offset="0.850" stop-color="#5d6f2c"/><stop offset="0.905" stop-color="#746224"/><stop offset="0.985" stop-color="#864318"/><stop offset="1.000" stop-color="#823314"/></linearGradient><linearGradient id="g145" x1="0" y1="0" x2="0" y2="1"><stop offset="0.000" stop-color="#130f26"/><stop offset="0.296" stop-color="#151634"/><stop offset="0.539" stop-color="#1c2959"/><stop offset="0.589" stop-color="#1e2f66"/><stop offset="0.751" stop-color="#2f5d43"/><stop offset="0.850" stop-color="#5d6f2c"/><stop offset="0.862" stop-color="#746224"/><stop offset="0.942" stop-color="#843b16"/><stop offset="1.000" stop-color="#823314"/></linearGradient><linearGradient id="g146" x1="0" y1="0" x2="0" y2="1"><stop offset="0.000" stop-color="#130f26"/><stop offset="0.285" stop-color="#151634"/><stop offset="0.518" stop-color="#1c2959"/><stop offset="0.568" stop-color="#1e2f66"/><stop offset="0.749" stop-color="#2f5d43"/><stop offset="0.850" stop-color="#5d6f2c"/><stop offset="0.842" stop-color="#746224"/><stop offset="0.922" stop-color="#802e12"/><stop offset="1.000" stop-color="#823314"/></linearGradient><linearGradient id="g147" x1="0" y1="0" x2="0" y2="1"><stop offset="0.000" stop-color="#130f26"/><stop offset="0.291" stop-color="#151634"/><stop offset="0.529" stop-color="#1c2959"/><stop offset="0.590" stop-color="#1e2f66"/><stop offset="0.800" stop-color="#2f5d43"/><stop offset="0.850" stop-color="#5d6f2c"/><stop offset="0.878" stop-color="#746224"/><stop offset="0.958" stop-color="#894c1b"/><stop offset="1.000" stop-color="#823314"/></linearGradient><linearGradient id="g148" x1="0" y1="0" x2="0" y2="1"><stop offset="0.000" stop-color="#130f26"/><stop offset="0.243" stop-color="#151634"/><stop offset="0.441" stop-color="#1c2959"/><stop offset="0.564" stop-color="#1e2f66"/><stop offset="0.784" stop-color="#2f5d43"/><stop offset="0.850" stop-color="#5d6f2c"/><stop offset="0.872" stop-color="#746224"/><stop offset="0.952" stop-color="#864318"/><stop offset="1.000" stop-color="#823314"/></linearGradient><linearGradient id="g149" x1="0" y1="0" x2="0" y2="1"><stop offset="0.000" stop-color="#130f26"/><stop offset="0.274" stop-color="#151634"/><stop offset="0.499" stop-color="#1c2959"/><stop offset="0.549" stop-color="#1e2f66"/><stop offset="0.729" stop-color="#2f5d43"/><stop offset="0.850" stop-color="#5d6f2c"/><stop offset="0.843" stop-color="#746224"/><stop offset="0.923" stop-color="#864318"/><stop offset="1.000" stop-color="#823314"/></linearGradient><linearGradient id="g150" x1="0" y1="0" x2="0" y2="1"><stop offset="0.000" stop-color="#130f26"/><stop offset="0.247" stop-color="#151634"/><stop offset="0.449" stop-color="#1c2959"/><stop offset="0.523" stop-color="#1e2f66"/><stop offset="0.743" stop-color="#2f5d43"/><stop offset="0.850" stop-color="#5d6f2c"/><stop offset="0.860" stop-color="#746224"/><stop offset="0.940" stop-color="#843b16"/><stop offset="1.000" stop-color="#823314"/></linearGradient><linearGradient id="g151" x1="0" y1="0" x2="0" y2="1"><stop offset="0.000" stop-color="#130f26"/><stop offset="0.277" stop-color="#151634"/><stop offset="0.504" stop-color="#1c2959"/><stop offset="0.589" stop-color="#1e2f66"/><stop offset="0.800" stop-color="#2f5d43"/><stop offset="0.850" stop-color="#5d6f2c"/><stop offset="0.858" stop-color="#746224"/><stop offset="0.938" stop-color="#864318"/><stop offset="1.000" stop-color="#823314"/></linearGradient><linearGradient id="g152" x1="0" y1="0" x2="0" y2="1"><stop offset="0.000" stop-color="#130f26"/><stop offset="0.252" stop-color="#151634"/><stop offset="0.459" stop-color="#1c2959"/><stop offset="0.538" stop-color="#1e2f66"/><stop offset="0.758" stop-color="#2f5d43"/><stop offset="0.850" stop-color="#5d6f2c"/><stop offset="0.868" stop-color="#746224"/><stop offset="0.948" stop-color="#864318"/><stop offset="1.000" stop-color="#823314"/></linearGradient><linearGradient id="g153" x1="0" y1="0" x2="0" y2="1"><stop offset="0.000" stop-color="#130f26"/><stop offset="0.270" stop-color="#151634"/><stop offset="0.491" stop-color="#1c2959"/><stop offset="0.541" stop-color="#1e2f66"/><stop offset="0.699" stop-color="#2f5d43"/><stop offset="0.850" stop-color="#5d6f2c"/><stop offset="0.875" stop-color="#746224"/><stop offset="0.955" stop-color="#802e12"/><stop offset="1.000" stop-color="#823314"/></linearGradient><linearGradient id="g154" x1="0" y1="0" x2="0" y2="1"><stop offset="0.000" stop-color="#130f26"/><stop offset="0.264" stop-color="#151634"/><stop offset="0.480" stop-color="#1c2959"/><stop offset="0.530" stop-color="#1e2f66"/><stop offset="0.743" stop-color="#2f5d43"/><stop offset="0.850" stop-color="#5d6f2c"/><stop offset="0.863" stop-color="#746224"/><stop offset="0.943" stop-color="#802e12"/><stop offset="1.000" stop-color="#823314"/></linearGradient><linearGradient id="g155" x1="0" y1="0" x2="0" y2="1"><stop offset="0.000" stop-color="#130f26"/><stop offset="0.256" stop-color="#151634"/><stop offset="0.466" stop-color="#1c2959"/><stop offset="0.534" stop-color="#1e2f66"/><stop offset="0.754" stop-color="#2f5d43"/><stop offset="0.850" stop-color="#5d6f2c"/><stop offset="0.857" stop-color="#746224"/><stop offset="0.937" stop-color="#864318"/><stop offset="1.000" stop-color="#823314"/></linearGradient><linearGradient id="g156" x1="0" y1="0" x2="0" y2="1"><stop offset="0.000" stop-color="#130f26"/><stop offset="0.251" stop-color="#151634"/><stop offset="0.455" stop-color="#1c2959"/><stop offset="0.505" stop-color="#1e2f66"/><stop offset="0.698" stop-color="#2f5d43"/><stop offset="0.850" stop-color="#5d6f2c"/><stop offset="0.857" stop-color="#746224"/><stop offset="0.937" stop-color="#843b16"/><stop offset="1.000" stop-color="#823314"/></linearGradient><linearGradient id="g157" x1="0" y1="0" x2="0" y2="1"><stop offset="0.000" stop-color="#130f26"/><stop offset="0.275" stop-color="#151634"/><stop offset="0.500" stop-color="#1c2959"/><stop offset="0.550" stop-color="#1e2f66"/><stop offset="0.710" stop-color="#2f5d43"/><stop offset="0.850" stop-color="#5d6f2c"/><stop offset="0.841" stop-color="#746224"/><stop offset="0.921" stop-color="#802e12"/><stop offset="1.000" stop-color="#823314"/></linearGradient><linearGradient id="g158" x1="0" y1="0" x2="0" y2="1"><stop offset="0.000" stop-color="#130f26"/><stop offset="0.251" stop-color="#151634"/><stop offset="0.456" stop-color="#1c2959"/><stop offset="0.554" stop-color="#1e2f66"/><stop offset="0.774" stop-color="#2f5d43"/><stop offset="0.850" stop-color="#5d6f2c"/><stop offset="0.855" stop-color="#746224"/><stop offset="0.935" stop-color="#843b16"/><stop offset="1.000" stop-color="#823314"/></linearGradient><linearGradient id="g159" x1="0" y1="0" x2="0" y2="1"><stop offset="0.000" stop-color="#130f26"/><stop offset="0.247" stop-color="#151634"/><stop offset="0.450" stop-color="#1c2959"/><stop offset="0.500" stop-color="#1e2f66"/><stop offset="0.691" stop-color="#2f5d43"/><stop offset="0.850" stop-color="#5d6f2c"/><stop offset="0.859" stop-color="#746224"/><stop offset="0.939" stop-color="#843b16"/><stop offset="1.000" stop-color="#823314"/></linearGradient><linearGradient id="g160" x1="0" y1="0" x2="0" y2="1"><stop offset="0.000" stop-color="#130f26"/><stop offset="0.235" stop-color="#151634"/><stop offset="0.426" stop-color="#1c2959"/><stop offset="0.523" stop-color="#1e2f66"/><stop offset="0.743" stop-color="#2f5d43"/><stop offset="0.850" stop-color="#5d6f2c"/><stop offset="0.884" stop-color="#746224"/><stop offset="0.964" stop-color="#864318"/><stop offset="1.000" stop-color="#823314"/></linearGradient><linearGradient id="g161" x1="0" y1="0" x2="0" y2="1"><stop offset="0.000" stop-color="#130f27"/><stop offset="0.232" stop-color="#161635"/><stop offset="0.421" stop-color="#1c2959"/><stop offset="0.569" stop-color="#1e2f66"/><stop offset="0.789" stop-color="#2f5d43"/><stop offset="0.850" stop-color="#5d6f2c"/><stop offset="0.867" stop-color="#746224"/><stop offset="0.947" stop-color="#802e12"/><stop offset="1.000" stop-color="#823314"/></linearGradient><linearGradient id="g162" x1="0" y1="0" x2="0" y2="1"><stop offset="0.000" stop-color="#130f26"/><stop offset="0.249" stop-color="#151634"/><stop offset="0.453" stop-color="#1c2959"/><stop offset="0.503" stop-color="#1e2f66"/><stop offset="0.718" stop-color="#2f5d43"/><stop offset="0.850" stop-color="#5d6f2c"/><stop offset="0.897" stop-color="#746224"/><stop offset="0.977" stop-color="#894c1b"/><stop offset="1.000" stop-color="#823314"/></linearGradient><linearGradient id="g163" x1="0" y1="0" x2="0" y2="1"><stop offset="0.000" stop-color="#131028"/><stop offset="0.225" stop-color="#161735"/><stop offset="0.408" stop-color="#1c295a"/><stop offset="0.511" stop-color="#1e2f66"/><stop offset="0.731" stop-color="#2f5d43"/><stop offset="0.850" stop-color="#5d6f2c"/><stop offset="0.893" stop-color="#746224"/><stop offset="0.973" stop-color="#802e12"/><stop offset="1.000" stop-color="#823314"/></linearGradient><linearGradient id="g164" x1="0" y1="0" x2="0" y2="1"><stop offset="0.000" stop-color="#130f26"/><stop offset="0.262" stop-color="#151634"/><stop offset="0.477" stop-color="#1c2959"/><stop offset="0.527" stop-color="#1e2f66"/><stop offset="0.739" stop-color="#2f5d43"/><stop offset="0.850" stop-color="#5d6f2c"/><stop offset="0.845" stop-color="#746224"/><stop offset="0.925" stop-color="#802e12"/><stop offset="1.000" stop-color="#823314"/></linearGradient><linearGradient id="g165" x1="0" y1="0" x2="0" y2="1"><stop offset="0.000" stop-color="#130f26"/><stop offset="0.254" stop-color="#151634"/><stop offset="0.461" stop-color="#1c2959"/><stop offset="0.511" stop-color="#1e2f66"/><stop offset="0.710" stop-color="#2f5d43"/><stop offset="0.850" stop-color="#5d6f2c"/><stop offset="0.848" stop-color="#746224"/><stop offset="0.928" stop-color="#864318"/><stop offset="1.000" stop-color="#823314"/></linearGradient><linearGradient id="g166" x1="0" y1="0" x2="0" y2="1"><stop offset="0.000" stop-color="#14112b"/><stop offset="0.200" stop-color="#161838"/><stop offset="0.363" stop-color="#1c295a"/><stop offset="0.577" stop-color="#1e2f66"/><stop offset="0.797" stop-color="#2f5d43"/><stop offset="0.850" stop-color="#5d6f2c"/><stop offset="0.848" stop-color="#746224"/><stop offset="0.928" stop-color="#802e12"/><stop offset="1.000" stop-color="#823314"/></linearGradient><linearGradient id="g167" x1="0" y1="0" x2="0" y2="1"><stop offset="0.000" stop-color="#14122d"/><stop offset="0.187" stop-color="#161839"/><stop offset="0.340" stop-color="#1c295b"/><stop offset="0.553" stop-color="#1e2f66"/><stop offset="0.773" stop-color="#2f5d43"/><stop offset="0.850" stop-color="#5d6f2c"/><stop offset="0.840" stop-color="#746224"/><stop offset="0.920" stop-color="#864318"/><stop offset="1.000" stop-color="#823314"/></linearGradient><linearGradient id="g168" x1="0" y1="0" x2="0" y2="1"><stop offset="0.000" stop-color="#14122d"/><stop offset="0.187" stop-color="#161839"/><stop offset="0.339" stop-color="#1c295b"/><stop offset="0.570" stop-color="#1e2f66"/><stop offset="0.790" stop-color="#2f5d43"/><stop offset="0.850" stop-color="#5d6f2c"/><stop offset="0.885" stop-color="#746224"/><stop offset="0.965" stop-color="#843b16"/><stop offset="1.000" stop-color="#823314"/></linearGradient><linearGradient id="g169" x1="0" y1="0" x2="0" y2="1"><stop offset="0.000" stop-color="#131029"/><stop offset="0.218" stop-color="#161736"/><stop offset="0.396" stop-color="#1c295a"/><stop offset="0.535" stop-color="#1e2f66"/><stop offset="0.755" stop-color="#2f5d43"/><stop offset="0.850" stop-color="#5d6f2c"/><stop offset="0.877" stop-color="#746224"/><stop offset="0.957" stop-color="#802e12"/><stop offset="1.000" stop-color="#823314"/></linearGradient><linearGradient id="g170" x1="0" y1="0" x2="0" y2="1"><stop offset="0.000" stop-color="#14122c"/><stop offset="0.195" stop-color="#161838"/><stop offset="0.354" stop-color="#1c295a"/><stop offset="0.473" stop-color="#1e2f66"/><stop offset="0.693" stop-color="#2f5d43"/><stop offset="0.850" stop-color="#5d6f2c"/><stop offset="0.845" stop-color="#746224"/><stop offset="0.925" stop-color="#864318"/><stop offset="1.000" stop-color="#823314"/></linearGradient><linearGradient id="g171" x1="0" y1="0" x2="0" y2="1"><stop offset="0.000" stop-color="#15132f"/><stop offset="0.169" stop-color="#17193b"/><stop offset="0.307" stop-color="#1c295b"/><stop offset="0.487" stop-color="#1e2f66"/><stop offset="0.707" stop-color="#2f5d43"/><stop offset="0.850" stop-color="#5d6f2c"/><stop offset="0.882" stop-color="#746224"/><stop offset="0.962" stop-color="#894c1b"/><stop offset="1.000" stop-color="#823314"/></linearGradient><linearGradient id="g172" x1="0" y1="0" x2="0" y2="1"><stop offset="0.000" stop-color="#1e3c70"/><stop offset="0.500" stop-color="#224e74"/><stop offset="0.750" stop-color="#326850"/><stop offset="0.900" stop-color="#62702a"/><stop offset="0.950" stop-color="#8a501c"/><stop offset="1.000" stop-color="#7e2610"/></linearGradient><linearGradient id="g173" x1="0" y1="0" x2="0" y2="1"><stop offset="0.000" stop-color="#326254"/><stop offset="0.400" stop-color="#466e3c"/><stop offset="0.800" stop-color="#60722e"/><stop offset="0.900" stop-color="#8a501c"/><stop offset="1.000" stop-color="#7e2610"/></linearGradient><linearGradient id="g174" x1="0" y1="0" x2="0" y2="1"><stop offset="0.000" stop-color="#245470"/><stop offset="0.400" stop-color="#306c5c"/><stop offset="0.750" stop-color="#46743e"/><stop offset="0.900" stop-color="#62702a"/><stop offset="0.950" stop-color="#8a501c"/><stop offset="1.000" stop-color="#7e2610"/></linearGradient><linearGradient id="g175" x1="0" y1="0" x2="0" y2="1"><stop offset="0.000" stop-color="#295753"/><stop offset="0.350" stop-color="#2e634a"/><stop offset="0.700" stop-color="#456935"/><stop offset="0.860" stop-color="#62702a"/><stop offset="0.940" stop-color="#8a501c"/><stop offset="1.000" stop-color="#7e2610"/></linearGradient><linearGradient id="g176" x1="0" y1="0" x2="0" y2="1"><stop offset="0.000" stop-color="#214a69"/><stop offset="0.350" stop-color="#2a615a"/><stop offset="0.700" stop-color="#456935"/><stop offset="0.860" stop-color="#62702a"/><stop offset="0.940" stop-color="#8a501c"/><stop offset="1.000" stop-color="#7e2610"/></linearGradient><linearGradient id="g177" x1="0" y1="0" x2="0" y2="1"><stop offset="0.000" stop-color="#2b594f"/><stop offset="0.350" stop-color="#2f6347"/><stop offset="0.700" stop-color="#456935"/><stop offset="0.860" stop-color="#62702a"/><stop offset="0.940" stop-color="#8a501c"/><stop offset="1.000" stop-color="#7e2610"/></linearGradient><linearGradient id="g178" x1="0" y1="0" x2="0" y2="1"><stop offset="0.000" stop-color="#224c65"/><stop offset="0.350" stop-color="#2b6257"/><stop offset="0.700" stop-color="#456935"/><stop offset="0.860" stop-color="#62702a"/><stop offset="0.940" stop-color="#8a501c"/><stop offset="1.000" stop-color="#7e2610"/></linearGradient><linearGradient id="g179" x1="0" y1="0" x2="0" y2="1"><stop offset="0.000" stop-color="#1f486c"/><stop offset="0.350" stop-color="#29615d"/><stop offset="0.700" stop-color="#456935"/><stop offset="0.860" stop-color="#62702a"/><stop offset="0.940" stop-color="#8a501c"/><stop offset="1.000" stop-color="#7e2610"/></linearGradient><linearGradient id="g180" x1="0" y1="0" x2="0" y2="1"><stop offset="0.000" stop-color="#1e4670"/><stop offset="0.350" stop-color="#28615f"/><stop offset="0.700" stop-color="#456935"/><stop offset="0.860" stop-color="#62702a"/><stop offset="0.940" stop-color="#8a501c"/><stop offset="1.000" stop-color="#7e2610"/></linearGradient><linearGradient id="g181" x1="0" y1="0" x2="0" y2="1"><stop offset="0.000" stop-color="#181b40"/><stop offset="0.500" stop-color="#1e2f66"/><stop offset="0.800" stop-color="#32643c"/><stop offset="1.000" stop-color="#7e2610"/></linearGradient><linearGradient id="g182" x1="0" y1="0" x2="0" y2="1"><stop offset="0.000" stop-color="#3c7864" stop-opacity="1"/><stop offset="0.450" stop-color="#428054" stop-opacity="0.85"/><stop offset="0.700" stop-color="#50783c" stop-opacity="0.35"/><stop offset="1.000" stop-color="#6e6428" stop-opacity="0.15"/></linearGradient><linearGradient id="g183" x1="0" y1="0" x2="0" y2="1"><stop offset="0.000" stop-color="#8c7828"/><stop offset="0.500" stop-color="#966423"/><stop offset="1.000" stop-color="#8c3c19"/></linearGradient><linearGradient id="g184" x1="0" y1="0" x2="0" y2="1"><stop offset="0.000" stop-color="#2b594f"/><stop offset="0.350" stop-color="#2f6347"/><stop offset="0.700" stop-color="#456935"/><stop offset="0.860" stop-color="#62702a"/><stop offset="0.940" stop-color="#8a501c"/><stop offset="1.000" stop-color="#7e2610"/></linearGradient><linearGradient id="g185" x1="0" y1="0" x2="0" y2="1"><stop offset="0.000" stop-color="#5a823c"/><stop offset="0.500" stop-color="#62702a"/><stop offset="1.000" stop-color="#8a501c"/></linearGradient><linearGradient id="g186" x1="0" y1="0" x2="0" y2="1"><stop offset="0.000" stop-color="#4a1a12"/><stop offset="0.600" stop-color="#3e1611"/><stop offset="1.000" stop-color="#501c12"/></linearGradient><linearGradient id="g187" x1="0" y1="0" x2="0" y2="1"><stop offset="0.000" stop-color="#82461c"/><stop offset="0.100" stop-color="#706c2a"/><stop offset="0.250" stop-color="#607432"/><stop offset="0.400" stop-color="#7a6426"/><stop offset="0.450" stop-color="#4a1a12"/><stop offset="0.500" stop-color="#4a1a12"/><stop offset="0.550" stop-color="#647632"/><stop offset="0.780" stop-color="#6c742c"/><stop offset="0.810" stop-color="#74401c"/><stop offset="0.850" stop-color="#746e28"/><stop offset="1.000" stop-color="#80541e"/></linearGradient><linearGradient id="g188" x1="0" y1="0" x2="0" y2="1"><stop offset="0.000" stop-color="#3e1611"/><stop offset="0.550" stop-color="#3e1611"/><stop offset="0.800" stop-color="#542016"/><stop offset="1.000" stop-color="#5c2416"/></linearGradient><linearGradient id="g189" x1="0" y1="0" x2="0" y2="1"><stop offset="0.000" stop-color="#6e3219"/><stop offset="1.000" stop-color="#5a2214"/></linearGradient><linearGradient id="g190" x1="0" y1="0" x2="0" y2="1"><stop offset="0.000" stop-color="#8c6424"/><stop offset="0.500" stop-color="#826e28"/><stop offset="1.000" stop-color="#783216"/></linearGradient><linearGradient id="g191" x1="0" y1="0" x2="0" y2="1"><stop offset="0.000" stop-color="#7e5622"/><stop offset="0.014" stop-color="#786028"/><stop offset="0.035" stop-color="#36705c"/><stop offset="0.360" stop-color="#387258"/><stop offset="0.395" stop-color="#468450"/><stop offset="0.405" stop-color="#826428"/><stop offset="0.420" stop-color="#488746"/><stop offset="0.450" stop-color="#468246"/><stop offset="0.455" stop-color="#3e1611"/><stop offset="0.515" stop-color="#3e1611"/><stop offset="0.520" stop-color="#367058"/><stop offset="0.650" stop-color="#467844"/><stop offset="0.780" stop-color="#5a7a36"/><stop offset="0.805" stop-color="#647830"/><stop offset="0.810" stop-color="#825422"/><stop offset="0.825" stop-color="#825422"/><stop offset="0.830" stop-color="#6c7a30"/><stop offset="0.890" stop-color="#786026"/><stop offset="0.950" stop-color="#68361a"/><stop offset="1.000" stop-color="#441a10"/></linearGradient><linearGradient id="g192" x1="0" y1="0" x2="0" y2="1"><stop offset="0.000" stop-color="#7c5422"/><stop offset="0.400" stop-color="#785826"/><stop offset="0.450" stop-color="#3e1611"/><stop offset="0.520" stop-color="#3e1611"/><stop offset="0.600" stop-color="#785a24"/><stop offset="0.800" stop-color="#6e461e"/><stop offset="1.000" stop-color="#461810"/></linearGradient><linearGradient id="g193" x1="0" y1="0" x2="0" y2="1"><stop offset="0.000" stop-color="#8a501c"/><stop offset="0.300" stop-color="#7d7d2d"/><stop offset="0.420" stop-color="#82501e"/><stop offset="0.460" stop-color="#3e1611"/><stop offset="0.530" stop-color="#3e1611"/><stop offset="0.600" stop-color="#783218"/><stop offset="0.700" stop-color="#787d2d"/><stop offset="0.900" stop-color="#825a20"/><stop offset="1.000" stop-color="#501c10"/></linearGradient><linearGradient id="g194" x1="0" y1="0" x2="0" y2="1"><stop offset="0.000" stop-color="#82461c"/><stop offset="0.400" stop-color="#6e2814"/><stop offset="0.700" stop-color="#783c1a"/><stop offset="1.000" stop-color="#461810"/></linearGradient><filter id="nz" color-interpolation-filters="sRGB" x="0" y="0" width="100%" height="100%"><feTurbulence type="fractalNoise" baseFrequency=".9 .55" numOctaves="2" seed="3" result="n"/><feColorMatrix type="matrix" values="0 0 0 0 0  0 0 0 0 0  0 0 0 0 0  1.6 0 0 0 -.55"/></filter><filter id="nz2" color-interpolation-filters="sRGB" x="0" y="0" width="100%" height="100%"><feTurbulence type="fractalNoise" baseFrequency=".9 .55" numOctaves="2" seed="11" result="n"/><feColorMatrix type="matrix" values="0 0 0 0 .35  0 0 0 0 .75  0 0 0 0 .55  1.6 0 0 0 -.6"/></filter><filter id="nz3" color-interpolation-filters="sRGB" x="0" y="0" width="100%" height="100%"><feTurbulence type="fractalNoise" baseFrequency=".7 .6" numOctaves="2" seed="5"/><feColorMatrix type="matrix" values="0 0 0 0 .13  0 0 0 0 .27  0 0 0 0 .52  2.2 0 0 0 -.75"/></filter><filter id="nz4" color-interpolation-filters="sRGB" x="0" y="0" width="100%" height="100%"><feTurbulence type="fractalNoise" baseFrequency=".8 .6" numOctaves="2" seed="9"/><feColorMatrix type="matrix" values="0 0 0 0 .24  0 0 0 0 .44  0 0 0 0 .2  2 0 0 0 -.8"/></filter><filter id="nz5" color-interpolation-filters="sRGB" x="0" y="0" width="100%" height="100%"><feTurbulence type="fractalNoise" baseFrequency=".8 .5" numOctaves="2" seed="2"/><feColorMatrix type="matrix" values="0 0 0 0 .45  0 0 0 0 .15  0 0 0 0 .08  2 0 0 0 -.8"/></filter></defs><rect x="27.0" y="0" width="5.3" height="80" fill="url(#g1)"/><rect x="32.0" y="0" width="5.3" height="80" fill="url(#g2)"/><rect x="37.0" y="0" width="5.3" height="80" fill="url(#g3)"/><rect x="42.0" y="0" width="5.3" height="80" fill="url(#g4)"/><rect x="47.0" y="0" width="5.3" height="80" fill="url(#g5)"/><rect x="52.0" y="0" width="5.3" height="80" fill="url(#g6)"/><rect x="57.0" y="0" width="5.3" height="80" fill="url(#g7)"/><rect x="62.0" y="0" width="5.3" height="80" fill="url(#g8)"/><rect x="67.0" y="0" width="5.3" height="80" fill="url(#g9)"/><rect x="72.0" y="0" width="5.3" height="80" fill="url(#g10)"/><rect x="77.0" y="0" width="5.3" height="80" fill="url(#g11)"/><rect x="82.0" y="0" width="5.3" height="80" fill="url(#g12)"/><rect x="87.0" y="0" width="5.3" height="80" fill="url(#g13)"/><rect x="92.0" y="0" width="5.3" height="80" fill="url(#g14)"/><rect x="97.0" y="0" width="5.3" height="80" fill="url(#g15)"/><rect x="102.0" y="0" width="5.3" height="80" fill="url(#g16)"/><rect x="107.0" y="0" width="5.3" height="80" fill="url(#g17)"/><rect x="112.0" y="0" width="5.3" height="80" fill="url(#g18)"/><rect x="117.0" y="0" width="5.3" height="80" fill="url(#g19)"/><rect x="122.0" y="0" width="5.3" height="80" fill="url(#g20)"/><rect x="127.0" y="0" width="5.3" height="80" fill="url(#g21)"/><rect x="132.0" y="0" width="5.3" height="80" fill="url(#g22)"/><rect x="137.0" y="0" width="5.3" height="80" fill="url(#g23)"/><rect x="142.0" y="0" width="5.3" height="80" fill="url(#g24)"/><rect x="147.0" y="0" width="5.3" height="80" fill="url(#g25)"/><rect x="152.0" y="0" width="5.3" height="80" fill="url(#g26)"/><rect x="157.0" y="0" width="5.3" height="80" fill="url(#g27)"/><rect x="162.0" y="0" width="5.3" height="80" fill="url(#g28)"/><rect x="167.0" y="0" width="5.3" height="80" fill="url(#g29)"/><rect x="172.0" y="0" width="5.3" height="80" fill="url(#g30)"/><rect x="177.0" y="0" width="5.3" height="80" fill="url(#g31)"/><rect x="182.0" y="0" width="5.3" height="80" fill="url(#g32)"/><rect x="187.0" y="0" width="5.3" height="80" fill="url(#g33)"/><rect x="192.0" y="0" width="5.3" height="80" fill="url(#g34)"/><rect x="197.0" y="0" width="5.3" height="80" fill="url(#g35)"/><rect x="202.0" y="0" width="5.3" height="80" fill="url(#g36)"/><rect x="207.0" y="0" width="5.3" height="80" fill="url(#g37)"/><rect x="212.0" y="0" width="5.3" height="80" fill="url(#g38)"/><rect x="217.0" y="0" width="5.3" height="80" fill="url(#g39)"/><rect x="222.0" y="0" width="5.3" height="80" fill="url(#g40)"/><rect x="227.0" y="0" width="5.3" height="80" fill="url(#g41)"/><rect x="232.0" y="0" width="5.3" height="80" fill="url(#g42)"/><rect x="237.0" y="0" width="5.3" height="80" fill="url(#g43)"/><rect x="242.0" y="0" width="5.3" height="80" fill="url(#g44)"/><rect x="247.0" y="0" width="5.3" height="80" fill="url(#g45)"/><rect x="252.0" y="0" width="5.3" height="80" fill="url(#g46)"/><rect x="257.0" y="0" width="5.3" height="80" fill="url(#g47)"/><rect x="262.0" y="0" width="5.3" height="80" fill="url(#g48)"/><rect x="267.0" y="0" width="5.3" height="80" fill="url(#g49)"/><rect x="272.0" y="0" width="5.3" height="80" fill="url(#g50)"/><rect x="277.0" y="0" width="5.3" height="80" fill="url(#g51)"/><rect x="282.0" y="0" width="5.3" height="80" fill="url(#g52)"/><rect x="287.0" y="0" width="5.3" height="80" fill="url(#g53)"/><rect x="292.0" y="0" width="5.3" height="80" fill="url(#g54)"/><rect x="297.0" y="0" width="5.3" height="80" fill="url(#g55)"/><rect x="302.0" y="0" width="5.3" height="80" fill="url(#g56)"/><rect x="307.0" y="0" width="5.3" height="80" fill="url(#g57)"/><rect x="312.0" y="0" width="5.3" height="80" fill="url(#g58)"/><rect x="317.0" y="0" width="5.3" height="80" fill="url(#g59)"/><rect x="322.0" y="0" width="5.3" height="80" fill="url(#g60)"/><rect x="327.0" y="0" width="5.3" height="80" fill="url(#g61)"/><rect x="332.0" y="0" width="5.3" height="80" fill="url(#g62)"/><rect x="337.0" y="0" width="5.3" height="80" fill="url(#g63)"/><rect x="342.0" y="0" width="5.3" height="80" fill="url(#g64)"/><rect x="347.0" y="0" width="5.3" height="80" fill="url(#g65)"/><rect x="352.0" y="0" width="5.3" height="80" fill="url(#g66)"/><rect x="357.0" y="0" width="5.3" height="80" fill="url(#g67)"/><rect x="362.0" y="0" width="5.3" height="80" fill="url(#g68)"/><rect x="367.0" y="0" width="5.3" height="80" fill="url(#g69)"/><rect x="372.0" y="0" width="5.3" height="80" fill="url(#g70)"/><rect x="377.0" y="0" width="5.3" height="80" fill="url(#g71)"/><rect x="382.0" y="0" width="5.3" height="80" fill="url(#g72)"/><rect x="387.0" y="0" width="5.3" height="80" fill="url(#g73)"/><rect x="392.0" y="0" width="5.3" height="80" fill="url(#g74)"/><rect x="397.0" y="0" width="5.3" height="80" fill="url(#g75)"/><rect x="402.0" y="0" width="5.3" height="80" fill="url(#g76)"/><rect x="407.0" y="0" width="5.3" height="80" fill="url(#g77)"/><rect x="412.0" y="0" width="5.3" height="80" fill="url(#g78)"/><rect x="417.0" y="0" width="5.3" height="80" fill="url(#g79)"/><rect x="422.0" y="0" width="5.3" height="80" fill="url(#g80)"/><rect x="427.0" y="0" width="5.3" height="80" fill="url(#g81)"/><rect x="432.0" y="0" width="5.3" height="80" fill="url(#g82)"/><rect x="437.0" y="0" width="5.3" height="80" fill="url(#g83)"/><rect x="442.0" y="0" width="5.3" height="80" fill="url(#g84)"/><rect x="447.0" y="0" width="5.3" height="80" fill="url(#g85)"/><rect x="452.0" y="0" width="5.3" height="80" fill="url(#g86)"/><rect x="457.0" y="0" width="5.3" height="80" fill="url(#g87)"/><rect x="462.0" y="0" width="5.3" height="80" fill="url(#g88)"/><rect x="467.0" y="0" width="5.3" height="80" fill="url(#g89)"/><rect x="472.0" y="0" width="5.3" height="80" fill="url(#g90)"/><rect x="477.0" y="0" width="5.3" height="80" fill="url(#g91)"/><rect x="482.0" y="0" width="5.3" height="80" fill="url(#g92)"/><rect x="487.0" y="0" width="5.3" height="80" fill="url(#g93)"/><rect x="492.0" y="0" width="5.3" height="80" fill="url(#g94)"/><rect x="497.0" y="0" width="5.3" height="80" fill="url(#g95)"/><rect x="502.0" y="0" width="5.3" height="80" fill="url(#g96)"/><rect x="507.0" y="0" width="5.3" height="80" fill="url(#g97)"/><rect x="512.0" y="0" width="5.3" height="80" fill="url(#g98)"/><rect x="517.0" y="0" width="5.3" height="80" fill="url(#g99)"/><rect x="522.0" y="0" width="5.3" height="80" fill="url(#g100)"/><rect x="527.0" y="0" width="5.3" height="80" fill="url(#g101)"/><rect x="532.0" y="0" width="5.3" height="80" fill="url(#g102)"/><rect x="537.0" y="0" width="5.3" height="80" fill="url(#g103)"/><rect x="542.0" y="0" width="5.3" height="80" fill="url(#g104)"/><rect x="547.0" y="0" width="5.3" height="80" fill="url(#g105)"/><rect x="552.0" y="0" width="5.3" height="80" fill="url(#g106)"/><rect x="557.0" y="0" width="5.3" height="80" fill="url(#g107)"/><rect x="562.0" y="0" width="5.3" height="80" fill="url(#g108)"/><rect x="567.0" y="0" width="5.3" height="80" fill="url(#g109)"/><rect x="572.0" y="0" width="5.3" height="80" fill="url(#g110)"/><rect x="577.0" y="0" width="5.3" height="80" fill="url(#g111)"/><rect x="582.0" y="0" width="5.3" height="80" fill="url(#g112)"/><rect x="587.0" y="0" width="5.3" height="80" fill="url(#g113)"/><rect x="592.0" y="0" width="5.3" height="80" fill="url(#g114)"/><rect x="597.0" y="0" width="5.3" height="80" fill="url(#g115)"/><rect x="602.0" y="0" width="5.3" height="80" fill="url(#g116)"/><rect x="607.0" y="0" width="5.3" height="80" fill="url(#g117)"/><rect x="612.0" y="0" width="5.3" height="80" fill="url(#g118)"/><rect x="617.0" y="0" width="5.3" height="80" fill="url(#g119)"/><rect x="622.0" y="0" width="5.3" height="80" fill="url(#g120)"/><rect x="627.0" y="0" width="5.3" height="80" fill="url(#g121)"/><rect x="632.0" y="0" width="5.3" height="80" fill="url(#g122)"/><rect x="637.0" y="0" width="5.3" height="80" fill="url(#g123)"/><rect x="642.0" y="0" width="5.3" height="80" fill="url(#g124)"/><rect x="647.0" y="0" width="5.3" height="80" fill="url(#g125)"/><rect x="652.0" y="0" width="5.3" height="80" fill="url(#g126)"/><rect x="657.0" y="0" width="5.3" height="80" fill="url(#g127)"/><rect x="662.0" y="0" width="5.3" height="80" fill="url(#g128)"/><rect x="667.0" y="0" width="5.3" height="80" fill="url(#g129)"/><rect x="672.0" y="0" width="5.3" height="80" fill="url(#g130)"/><rect x="677.0" y="0" width="5.3" height="80" fill="url(#g131)"/><rect x="682.0" y="0" width="5.3" height="80" fill="url(#g132)"/><rect x="687.0" y="0" width="5.3" height="80" fill="url(#g133)"/><rect x="692.0" y="0" width="5.3" height="80" fill="url(#g134)"/><rect x="697.0" y="0" width="5.3" height="80" fill="url(#g135)"/><rect x="702.0" y="0" width="5.3" height="80" fill="url(#g136)"/><rect x="707.0" y="0" width="5.3" height="80" fill="url(#g137)"/><rect x="712.0" y="0" width="5.3" height="80" fill="url(#g138)"/><rect x="717.0" y="0" width="5.3" height="80" fill="url(#g139)"/><rect x="722.0" y="0" width="5.3" height="80" fill="url(#g140)"/><rect x="727.0" y="0" width="5.3" height="80" fill="url(#g141)"/><rect x="732.0" y="0" width="5.3" height="80" fill="url(#g142)"/><rect x="737.0" y="0" width="5.3" height="80" fill="url(#g143)"/><rect x="742.0" y="0" width="5.3" height="80" fill="url(#g144)"/><rect x="747.0" y="0" width="5.3" height="80" fill="url(#g145)"/><rect x="752.0" y="0" width="5.3" height="80" fill="url(#g146)"/><rect x="757.0" y="0" width="5.3" height="80" fill="url(#g147)"/><rect x="762.0" y="0" width="5.3" height="80" fill="url(#g148)"/><rect x="767.0" y="0" width="5.3" height="80" fill="url(#g149)"/><rect x="772.0" y="0" width="5.3" height="80" fill="url(#g150)"/><rect x="777.0" y="0" width="5.3" height="80" fill="url(#g151)"/><rect x="782.0" y="0" width="5.3" height="80" fill="url(#g152)"/><rect x="787.0" y="0" width="5.3" height="80" fill="url(#g153)"/><rect x="792.0" y="0" width="5.3" height="80" fill="url(#g154)"/><rect x="797.0" y="0" width="5.3" height="80" fill="url(#g155)"/><rect x="802.0" y="0" width="5.3" height="80" fill="url(#g156)"/><rect x="807.0" y="0" width="5.3" height="80" fill="url(#g157)"/><rect x="812.0" y="0" width="5.3" height="80" fill="url(#g158)"/><rect x="817.0" y="0" width="5.3" height="80" fill="url(#g159)"/><rect x="822.0" y="0" width="5.3" height="80" fill="url(#g160)"/><rect x="827.0" y="0" width="5.3" height="80" fill="url(#g161)"/><rect x="832.0" y="0" width="5.3" height="80" fill="url(#g162)"/><rect x="837.0" y="0" width="5.3" height="80" fill="url(#g163)"/><rect x="842.0" y="0" width="5.3" height="80" fill="url(#g164)"/><rect x="847.0" y="0" width="5.3" height="80" fill="url(#g165)"/><rect x="852.0" y="0" width="5.3" height="80" fill="url(#g166)"/><rect x="857.0" y="0" width="5.3" height="80" fill="url(#g167)"/><rect x="862.0" y="0" width="5.3" height="80" fill="url(#g168)"/><rect x="867.0" y="0" width="5.3" height="80" fill="url(#g169)"/><rect x="872.0" y="0" width="5.3" height="80" fill="url(#g170)"/><rect x="877.0" y="0" width="5.3" height="80" fill="url(#g171)"/><rect x="0.0" y="0" width="3.3" height="80" fill="url(#g172)"/><rect x="3.0" y="0" width="2.8" height="80" fill="url(#g173)"/><rect x="5.5" y="0" width="2.8" height="80" fill="url(#g172)"/><rect x="8.0" y="0" width="4.3" height="80" fill="url(#g173)"/><rect x="12.0" y="0" width="4.8" height="80" fill="url(#g174)"/><rect x="16.5" y="0" width="3.3" height="80" fill="url(#g172)"/><rect x="19.5" y="0" width="3.8" height="80" fill="url(#g173)"/><rect x="23.0" y="0" width="4.3" height="80" fill="url(#g174)"/><rect x="323.0" y="0" width="3.3" height="80" fill="url(#g175)"/><rect x="326.0" y="0" width="2.3" height="80" fill="url(#g176)"/><rect x="328.0" y="0" width="4.3" height="80" fill="url(#g177)"/><rect x="332.0" y="0" width="8.3" height="80" fill="url(#g178)"/><rect x="340.0" y="0" width="7.3" height="80" fill="url(#g179)"/><rect x="347.0" y="0" width="5.3" height="80" fill="url(#g180)"/><rect x="327.0" y="0" width="1.2" height="80" fill="url(#g181)" opacity="0.7"/><rect x="34.0" y="0" width="1.0" height="80" fill="url(#g182)" opacity="0.38"/><rect x="39.5" y="0" width="1.0" height="80" fill="url(#g182)" opacity="0.45"/><rect x="50.5" y="0" width="1.0" height="80" fill="url(#g182)" opacity="0.45"/><rect x="55.5" y="0" width="1.0" height="80" fill="url(#g182)" opacity="0.38"/><rect x="60.5" y="0" width="1.5" height="80" fill="url(#g182)" opacity="0.6"/><rect x="65.0" y="0" width="1.0" height="80" fill="url(#g182)" opacity="0.3"/><rect x="72.0" y="0" width="1.3" height="80" fill="url(#g182)" opacity="0.52"/><rect x="135.0" y="0" width="1.0" height="80" fill="url(#g182)" opacity="0.38"/><rect x="169.5" y="0" width="1.5" height="80" fill="url(#g182)" opacity="0.6"/><rect x="179.5" y="0" width="1.3" height="80" fill="url(#g182)" opacity="0.6"/><rect x="202.0" y="0" width="1.0" height="80" fill="url(#g182)" opacity="0.3"/><rect x="219.5" y="0" width="1.3" height="80" fill="url(#g182)" opacity="0.6"/><rect x="261.5" y="0" width="1.2" height="80" fill="url(#g182)" opacity="0.52"/><rect x="286.0" y="0" width="1.2" height="80" fill="url(#g182)" opacity="0.52"/><rect x="353.0" y="0" width="1.5" height="80" fill="url(#g182)" opacity="0.52"/><rect x="395.5" y="0" width="1.2" height="80" fill="url(#g182)" opacity="0.45"/><rect x="413.5" y="0" width="1.0" height="80" fill="url(#g182)" opacity="0.3"/><rect x="466.0" y="0" width="1.6" height="80" fill="url(#g182)" opacity="0.71"/><rect x="503.0" y="0" width="1.0" height="80" fill="url(#g182)" opacity="0.3"/><rect x="559.0" y="0" width="1.2" height="80" fill="url(#g182)" opacity="0.52"/><rect x="561.5" y="0" width="1.5" height="80" fill="url(#g182)" opacity="0.45"/><rect x="586.5" y="0" width="1.3" height="80" fill="url(#g182)" opacity="0.64"/><rect x="594.5" y="0" width="1.0" height="80" fill="url(#g182)" opacity="0.45"/><rect x="614.5" y="0" width="1.0" height="80" fill="url(#g182)" opacity="0.38"/><rect x="642.0" y="0" width="1.5" height="80" fill="url(#g182)" opacity="0.52"/><rect x="661.5" y="0" width="1.8" height="80" fill="url(#g182)" opacity="0.68"/><rect x="736.5" y="0" width="1.5" height="80" fill="url(#g182)" opacity="0.45"/><rect x="752.5" y="0" width="1.2" height="80" fill="url(#g182)" opacity="0.52"/><rect x="760.0" y="0" width="1.0" height="80" fill="url(#g182)" opacity="0.3"/><rect x="768.0" y="0" width="1.5" height="80" fill="url(#g182)" opacity="0.52"/><rect x="818.0" y="0" width="1.5" height="80" fill="url(#g182)" opacity="0.6"/><rect x="863.0" y="0" width="1.2" height="80" fill="url(#g182)" opacity="0.6"/><rect x="877.5" y="0" width="1.2" height="80" fill="url(#g182)" opacity="0.52"/><rect x="445.0" y="0" width="1.8" height="80" fill="url(#g183)" opacity="0.95"/><rect x="882.0" y="0" width="3.0" height="80" fill="url(#g184)"/><rect x="885.0" y="0" width="3.2" height="80" fill="url(#g185)"/><rect x="888.0" y="0" width="11.0" height="80" fill="url(#g186)"/><rect x="898.6" y="0" width="12.6" height="80" fill="url(#g187)"/><rect x="898.6" y="0.0" width="1.6" height="80.0" fill="#6e3219" opacity="0.8"/><rect x="909.6" y="0.0" width="1.6" height="80.0" fill="#6e3219" opacity="0.8"/><rect x="911.0" y="0" width="45.0" height="80" fill="url(#g188)"/><rect x="956.0" y="0" width="2.2" height="80" fill="url(#g189)"/><rect x="958.0" y="0" width="3.6" height="80" fill="url(#g190)"/><rect x="961.5" y="0" width="153.5" height="80" fill="url(#g191)"/><rect x="962" y="3" width="153" height="27" filter="url(#nz3)" opacity=".55"/><rect x="962" y="42" width="153" height="14" filter="url(#nz3)" opacity=".4"/><rect x="962" y="3" width="153" height="75" filter="url(#nz4)" opacity=".22"/><rect x="961.5" y="32.0" width="153.5" height="1.0" fill="#826026" opacity="0.9"/><rect x="961.5" y="36.3" width="153.5" height="4.8" fill="#3e1611"/><rect x="961.5" y="64.6" width="153.5" height="1.2" fill="#805222" opacity="0.85"/><rect x="994.0" y="0" width="1.4" height="80" fill="url(#g192)" opacity="0.8"/><rect x="999.5" y="0" width="1.0" height="80" fill="url(#g192)" opacity="0.4"/><rect x="972.5" y="0" width="1.0" height="80" fill="url(#g192)" opacity="0.3"/><rect x="1065.0" y="0" width="1.1" height="80" fill="url(#g192)" opacity="0.75"/><rect x="1062.4" y="0" width="1.0" height="80" fill="url(#g192)" opacity="0.6"/><rect x="1022.5" y="0" width="6.5" height="80" fill="url(#g193)" opacity="0.92"/><rect x="1024.5" y="0" width="2.5" height="80" fill="url(#g194)" opacity="0.8"/><rect x="0" y="0" width="882" height="80" filter="url(#nz)" opacity=".45"/><rect x="0" y="0" width="882" height="80" filter="url(#nz2)" opacity=".25"/><rect x="911" y="46" width="45" height="34" filter="url(#nz5)" opacity=".3"/></svg>
<!--SP1-->
<div style="left:300px;top:253.300px;width:1115px;height:4.500px;background:#2f5331"></div>
<div style="left:300px;top:279px;width:982px;height:1px;background:#5f5f5f"></div>
<div style="left:300px;top:281.600px;width:1115px;height:9.800px;background:repeating-linear-gradient(90deg,#6b532c 0,#6b532c 1.500px,#634c28 1.500px,#634c28 2.400px)"></div>
<div style="left:300px;top:291.500px;width:1115px;height:10.500px;border:1px solid #595959;border-top:none"></div>
<div style="left:1281px;top:292.500px;width:1.400px;height:9px;background:#2c2c2c"></div>
<div style="left:1379px;top:292.500px;width:1.400px;height:9px;background:#2c2c2c"></div>
<div style="left:1306px;top:295px;width:1.400px;height:4.500px;background:#5a5a96"></div>
<div style="left:1330px;top:295px;width:1.400px;height:4.500px;background:#5a5a96"></div>
<div style="left:1355px;top:295px;width:1.400px;height:4.500px;background:#5a5a96"></div>
<div style="left:1404px;top:295px;width:1.400px;height:4.500px;background:#5a5a96"></div>
<div class="hl" style="top:351px"></div>
<div class="hl" style="top:393px"></div>
<div style="left:300px;top:434px;width:1115px;height:37px;background:#6e6e6e"></div>
<div style="left:300px;top:508px;width:1115px;height:37px;background:#6e6e6e"></div>
<div style="left:300px;top:582px;width:1115px;height:37px;background:#6e6e6e"></div>
<div style="left:300px;top:656px;width:1115px;height:37px;background:#6e6e6e"></div>
<div class="hl" style="top:434px;background:#464646"></div>
<div class="hl" style="top:471px"></div><div class="hl" style="top:508px"></div><div class="hl" style="top:545px"></div>
<div class="hl" style="top:582px"></div><div class="hl" style="top:619px"></div><div class="hl" style="top:656px"></div>
<div class="hl" style="top:693px"></div><div class="hl" style="top:734px;background:#444"></div>
<div class="t" style="left:1304px;top:407px;font-size:14px;font-weight:bold;color:#181818">N-bouts</div>
<svg style="left:1395px;top:405px" width="12" height="18" viewBox="0 0 12 18"><path d="M5.500 2l3 5.500h-6z" fill="#626262"/><path d="M5.500 16l3-4.500h-6z" fill="#666"/></svg>
<div class="td" style="left:1338.500px;top:445.500px">0</div>
<div class="td" style="left:1338.500px;top:482.500px">36</div>
<div class="td" style="left:1338.500px;top:519.500px">25</div>
<div class="td" style="left:1338.500px;top:556.500px">8</div>
<div class="td" style="left:1338.500px;top:593.500px">37</div>
<div class="td" style="left:1338.500px;top:630.500px">54</div>
<div class="td" style="left:1338.500px;top:667.500px">55</div>
<div class="td" style="left:1338.500px;top:704.500px">53</div>
<div class="td" style="left:1142px;top:667.500px">0.5</div>
<div class="td" style="left:1142px;top:704.500px">0.5</div>
<div class="td" style="left:362.500px;top:667.500px">W</div>
<div class="td" style="left:362.500px;top:704.500px">WASO</div>
<div class="td" style="left:526px;top:667.500px">238.5</div>
<div class="td" style="left:526px;top:704.500px">67</div>
<div class="td" style="left:722.500px;top:667.500px">477</div>
<div class="td" style="left:722.500px;top:704.500px">134</div>
<div style="left:300px;top:735px;width:56px;height:33px;border:1px solid #515151;border-radius:2px;background:linear-gradient(#737373,#696969);text-align:center;font-size:13px;line-height:30px;color:#181818;white-space:nowrap">Copy</div>
<!--PG1-->
<!--DG0-->
<div class="dlg"><div class="din">
<div style="left:218px;top:235px;width:136px;height:414px;background:#444444"></div>
<div style="left:354px;top:321px;width:914px;height:1px;background:#343634"></div>
<div style="left:354px;top:349px;width:914px;height:1px;background:#343634"></div>
<div style="left:858px;top:326px;width:1px;height:19px;background:#3b3d3b"></div>
<div style="left:955px;top:326px;width:1px;height:19px;background:#3b3d3b"></div>
<div style="left:1136px;top:326px;width:1px;height:19px;background:#3b3d3b"></div>
<div style="left:364px;top:415px;width:894px;height:20px;border-radius:5px;background:#2b2c2b"></div>
<div style="left:364px;top:455px;width:894px;height:20px;border-radius:5px;background:#2b2c2b"></div>
<div style="left:364px;top:495px;width:894px;height:20px;border-radius:5px;background:#2b2c2b"></div>
<div style="left:364px;top:535px;width:894px;height:20px;border-radius:5px;background:#2b2c2b"></div>
<div style="left:364px;top:575px;width:894px;height:20px;border-radius:5px;background:#2b2c2b"></div>
<div style="left:364px;top:355px;width:894px;height:60px;border-radius:5px;background:#205acd"></div>
<div style="left:394px;top:374px;width:858px;height:1px;background:#386bd8"></div>
<div style="left:394px;top:394px;width:858px;height:1px;background:#386bd8"></div>
<div style="left:354px;top:588px;width:914px;height:61px;background:#1e201e"></div>
<div style="left:354px;top:588px;width:914px;height:1px;background:#3a3c3a"></div>
<div style="left:1096px;top:609px;width:72px;height:20px;border-radius:5px;background:#595b59;box-shadow:inset 0 .5px 0 rgba(255,255,255,.12)"></div>
<div style="left:1176px;top:609px;width:72px;height:20px;border-radius:5px;background:linear-gradient(#2d6be3,#2159c9);box-shadow:inset 0 .5px 0 rgba(255,255,255,.18)"></div>
<div style="left:374px;top:280px;width:23px;height:20px;border-radius:5px;background:#585a58"></div>
<div style="left:398px;top:280px;width:23px;height:20px;border-radius:5px;background:#585a58"></div>
<div style="left:429px;top:280px;width:46px;height:20px;border-radius:5px;background:#585a58"></div>
<div style="left:483px;top:280px;width:45px;height:20px;border-radius:5px;background:#585a58"></div>
<div style="left:707.500px;top:280px;width:207px;height:20px;border-radius:5px;background:#595b59;box-shadow:inset 0 .5px 0 rgba(255,255,255,.12)"></div>
<div style="left:896.500px;top:282px;width:16px;height:16px;border-radius:4px;background:linear-gradient(#2f6ce4,#2259cb)"></div>
<div style="left:1095px;top:280px;width:152px;height:20px;border-radius:5.500px;background:#2b2d2b;border:1px solid #424442"></div>
<svg style="left:218px;top:235px" width="1050" height="414" viewBox="218 235 1050 414" fill="none">
<!-- toolbar icons -->
<g stroke="#7d7f7d" stroke-width="1.5" stroke-linecap="round" stroke-linejoin="round">
 <path d="M388 284.600l-5.400 5.400 5.400 5.400"/><path d="M407.300 284.600l5.400 5.400-5.400 5.400"/>
</g>
<g stroke="#dcdcdc" stroke-width="1.100" stroke-linecap="round">
 <path d="M443 285.600h9M443 289.400h9M443 293.200h9"/>
 <path d="M439.600 285.600h.6M439.600 289.400h.6M439.600 293.200h.6" stroke-width="1.400"/>
 <path d="M492.300 283.300h13.600M492.300 290.600h13.600" stroke-width="1"/>
</g>
<g stroke="#dcdcdc" stroke-width="1">
 <rect x="492.800" y="285.500" width="3.200" height="3.200" rx=".8"/><rect x="497.500" y="285.500" width="3.200" height="3.200" rx=".8"/><rect x="502.200" y="285.500" width="3.200" height="3.200" rx=".8"/>
 <rect x="492.800" y="292.800" width="3.200" height="3.200" rx=".8"/><rect x="497.500" y="292.800" width="3.200" height="3.200" rx=".8"/><rect x="502.200" y="292.800" width="3.200" height="3.200" rx=".8"/>
</g>
<g stroke="#ececec" stroke-width="1.900" stroke-linecap="round" stroke-linejoin="round">
 <path d="M461.800 288.800l3.300 3.200 3.300-3.200"/><path d="M514.800 288.800l3.300 3.200 3.300-3.200"/>
</g>
<!-- folder -->
<path d="M716.200 285.400a1.400 1.400 0 0 1 1.400-1.400h3.600l1.600 1.600h6.800a1.400 1.400 0 0 1 1.400 1.400v9a1.400 1.400 0 0 1-1.400 1.400h-12a1.400 1.400 0 0 1-1.400-1.400z" fill="#3fa4e8"/>
<path d="M716.200 287.200h14.800v8.800a1.400 1.400 0 0 1-1.400 1.400h-12a1.400 1.400 0 0 1-1.400-1.400z" fill="#5cb8f3"/>
<!-- stepper chevrons -->
<g stroke="#fff" stroke-width="1.500" stroke-linecap="round" stroke-linejoin="round"><path d="M901.700 288l2.800-2.800 2.800 2.800M901.700 292l2.800 2.800 2.800-2.800"/></g>
<!-- search magnifier -->
<circle cx="1106.700" cy="289.200" r="4.200" stroke="#d0d0d0" stroke-width="1.400"/><path d="M1109.800 292.300l3.400 3.400" stroke="#d0d0d0" stroke-width="1.600" stroke-linecap="round"/>
<!-- sort chevron -->
<path d="M1119.800 333.800l3.700 3.500 3.700-3.500" stroke="#a4a4a4" stroke-width="1.200" stroke-linecap="round" stroke-linejoin="round"/>
<!-- sidebar icons -->
<g id="dbx" fill="#2a9cf3">
 <path d="M240.200 275.600l3.500 2.250-3.500 2.250-3.500-2.250zM247.200 275.600l3.500 2.250-3.500 2.250-3.500-2.250zM240.200 280.100l3.500 2.250-3.500 2.250-3.500-2.250zM247.200 280.100l3.500 2.250-3.500 2.250-3.500-2.250zM243.700 283.300l3.500 2.250-3.500 2.250-3.500-2.250z"/>
</g>
<use href="#dbx" y="28"/>
<g stroke="#2a9cf3" stroke-width="1.400" stroke-linecap="round" stroke-linejoin="round">
 <circle cx="243.800" cy="337.400" r="6.300"/><path d="M243.800 332.600v4.800h-3.600"/>
 <path d="M244.700 359.700l-1.200 1.900-5 9M242.300 359.900l6.600 10.700M237 367.800h5.200M245.600 367.800h5"/>
 <path d="M244.800 387.200h-4.300a1.800 1.800 0 0 0-1.800 1.800v9.200a1.800 1.800 0 0 0 1.800 1.800h6.500a1.800 1.800 0 0 0 1.800-1.800v-6.900zM244.800 387.400v2.400a1.500 1.500 0 0 0 1.500 1.500h2.400"/>
 <rect x="236.900" y="416.200" width="14.400" height="11" rx="2"/><path d="M237 419.100h14.200"/>
 <path d="M239.800 424.300h8.600" stroke-width="1.900" stroke-linecap="butt"/>
 <circle cx="244" cy="449.400" r="6.300"/><path d="M244 446v6.400M241.300 450l2.700 2.700 2.700-2.700"/>
</g>
<g stroke="#a2a2a2" stroke-width="1" stroke-linejoin="round" stroke-linecap="round">
 <path d="M236.800 510.400l2.300-4.700a1.500 1.500 0 0 1 1.300-.8h6.600a1.500 1.500 0 0 1 1.300.8l2.300 4.700"/>
 <rect x="236.700" y="509.700" width="14" height="5" rx="2"/><path d="M247.600 512.200h.8" stroke-width="1.300"/>
</g>
<path d="M326 505.600l4.400 4.700h-8.800z" fill="#8c8c8c"/><rect x="321.600" y="511.600" width="8.800" height="1.900" rx=".5" fill="#8c8c8c"/>
<g stroke="#9e9e9e" stroke-width=".9">
 <circle cx="243.900" cy="537.400" r="6.500"/><ellipse cx="243.900" cy="537.400" rx="2.900" ry="6.500"/><path d="M237.400 537.400h13M243.900 530.900v13M238.600 534h10.600M238.600 540.800h10.600"/>
</g>
<!-- file icons -->
<defs>
 <g id="fdoc"><path d="M0 1.200a1.200 1.200 0 0 1 1.200-1.200h6.600l4.200 4.200v8.600a1.200 1.200 0 0 1-1.200 1.200h-9.600a1.200 1.200 0 0 1-1.200-1.200z" fill="#f2f2f2"/><path d="M7.800 0v3a1.200 1.200 0 0 0 1.200 1.200h3z" fill="#c9c9c9"/></g>
 <g id="fxml"><path d="M0 1.200a1.200 1.200 0 0 1 1.200-1.200h6.600l4.200 4.200v8.600a1.200 1.200 0 0 1-1.200 1.200h-9.600a1.200 1.200 0 0 1-1.200-1.200z" fill="#e4e4e4"/><rect x="1.600" y="1.600" width="8.600" height="8" fill="#c2c2c2"/><path d="M7.800 0v3a1.200 1.200 0 0 0 1.200 1.200h3z" fill="#f4f4f4"/><path d="M2.600 11.600h6.800" stroke="#777" stroke-width="1.400" stroke-dasharray="1.800 .7"/></g>
</defs>
<use href="#fdoc" x="382" y="358"/><use href="#fxml" x="382" y="378"/><use href="#fdoc" x="382" y="398"/><use href="#fxml" x="382" y="418"/><use href="#fdoc" x="382" y="438"/><use href="#fxml" x="382" y="458"/><use href="#fdoc" x="382" y="478"/>
</svg>
<div class="t" style="left:234.3px;top:252.69px;font-size:11px;color:#8d8d8d;font-weight:bold;">Favorites</div>
<div class="t" style="left:234.3px;top:481.09px;font-size:11px;color:#8d8d8d;font-weight:bold;">Locations</div>
<div class="t" style="left:234.3px;top:568.69px;font-size:11px;color:#8d8d8d;font-weight:bold;">Tags</div>
<div class="t" style="left:258.5px;top:274.80px;font-size:13px;color:#e6e6e6;letter-spacing:0.107px;text-shadow:.35px 0 0 #e6e6e6">Dropbox (...</div>
<div class="t" style="left:258.5px;top:302.80px;font-size:13px;color:#e6e6e6;letter-spacing:0.107px;text-shadow:.35px 0 0 #e6e6e6">Dropbox (...</div>
<div class="t" style="left:258.5px;top:330.80px;font-size:13px;color:#e6e6e6;letter-spacing:0.028px;text-shadow:.35px 0 0 #e6e6e6">Recents</div>
<div class="t" style="left:258.5px;top:358.80px;font-size:13px;color:#e6e6e6;letter-spacing:0.303px;text-shadow:.35px 0 0 #e6e6e6">Applications</div>
<div class="t" style="left:258.5px;top:386.80px;font-size:13px;color:#e6e6e6;letter-spacing:0.294px;text-shadow:.35px 0 0 #e6e6e6">Documents</div>
<div class="t" style="left:258.5px;top:414.70px;font-size:13px;color:#e6e6e6;letter-spacing:0.271px;text-shadow:.35px 0 0 #e6e6e6">Desktop</div>
<div class="t" style="left:258.5px;top:442.80px;font-size:13px;color:#e6e6e6;letter-spacing:0.175px;text-shadow:.35px 0 0 #e6e6e6">Downloads</div>
<div class="t" style="left:258.5px;top:503.20px;font-size:13px;color:#e6e6e6;letter-spacing:0.068px;text-shadow:.35px 0 0 #e6e6e6">OBS-2...</div>
<div class="t" style="left:258.5px;top:530.90px;font-size:13px;color:#e6e6e6;letter-spacing:0.359px;text-shadow:.35px 0 0 #e6e6e6">Network</div>
<div class="t" style="left:750.6px;top:246.59px;font-size:11px;color:#d9d9d9;letter-spacing:0.284px;text-shadow:.4px 0 0 #d9d9d9">Choose Files to Upload</div>
<div class="t" style="left:401.2px;top:330.09px;font-size:11px;color:#b4b4b4;">Name</div>
<div class="t" style="left:866.1px;top:330.09px;font-size:11px;color:#b4b4b4;">Size</div>
<div class="t" style="left:963.3px;top:330.09px;font-size:11px;color:#e4e4e4;font-weight:bold;letter-spacing:0.283px;">Date Modified</div>
<div class="t" style="left:1144.3px;top:330.09px;font-size:11px;color:#b4b4b4;">Kind</div>
<div class="t" style="left:735.5px;top:283.10px;font-size:13px;color:#e0e0e0;letter-spacing:0.330px;">edfs</div>
<div class="t" style="left:1122.0px;top:283.90px;font-size:13px;color:#6e706e;letter-spacing:0.133px;">Search</div>
<div class="t" style="left:1132.1px;transform:translateX(-50%);top:612.40px;font-size:13px;color:#e6e6e6;letter-spacing:0.205px;">Cancel</div>
<div class="t" style="left:1212.1px;transform:translateX(-50%);top:612.40px;font-size:13px;color:#ffffff;letter-spacing:0.216px;">Upload</div>
<div class="t" style="left:401.3px;top:357.60px;font-size:13px;color:#ffffff;letter-spacing:-0.130px;">ps-nsrr01.eannot</div>
<div class="t" style="left:948.7px;transform:translateX(-100%);top:357.60px;font-size:13px;color:#e8eefb;letter-spacing:-0.472px;">3 KB</div>
<div class="t" style="left:963.3px;top:357.60px;font-size:13px;color:#e8eefb;letter-spacing:-0.330px;">Today at 12:37 PM</div>
<div class="t" style="left:1144.3px;top:357.60px;font-size:13px;color:#e8eefb;letter-spacing:-0.206px;">Document</div>
<div class="t" style="left:401.3px;top:377.60px;font-size:13px;color:#ffffff;letter-spacing:-0.017px;">learn-nsrr01-profusion.xml</div>
<div class="t" style="left:948.7px;transform:translateX(-100%);top:377.60px;font-size:13px;color:#e8eefb;letter-spacing:-0.309px;">166 KB</div>
<div class="t" style="left:963.3px;top:377.60px;font-size:13px;color:#e8eefb;letter-spacing:-0.242px;">Aug 11, 2020 at 3:03 PM</div>
<div class="t" style="left:1144.3px;top:377.60px;font-size:13px;color:#e8eefb;letter-spacing:-0.711px;">XML</div>
<div class="t" style="left:401.3px;top:397.60px;font-size:13px;color:#ffffff;letter-spacing:-0.093px;">learn-nsrr01.edf</div>
<div class="t" style="left:948.7px;transform:translateX(-100%);top:397.60px;font-size:13px;color:#e8eefb;letter-spacing:-0.103px;">62.2 MB</div>
<div class="t" style="left:963.3px;top:397.60px;font-size:13px;color:#e8eefb;letter-spacing:-0.242px;">Aug 11, 2020 at 3:03 PM</div>
<div class="t" style="left:1144.3px;top:397.60px;font-size:13px;color:#e8eefb;letter-spacing:-0.206px;">Document</div>
<div class="t" style="left:401.3px;top:417.60px;font-size:13px;color:#dfdfdf;letter-spacing:0.056px;">learn-nsrr02-profusion.xml</div>
<div class="t" style="left:948.7px;transform:translateX(-100%);top:417.60px;font-size:13px;color:#c4c4c4;letter-spacing:-0.544px;">74 KB</div>
<div class="t" style="left:963.3px;top:417.60px;font-size:13px;color:#c4c4c4;letter-spacing:-0.242px;">Aug 11, 2020 at 3:03 PM</div>
<div class="t" style="left:1144.3px;top:417.60px;font-size:13px;color:#c4c4c4;letter-spacing:-0.711px;">XML</div>
<div class="t" style="left:401.3px;top:437.60px;font-size:13px;color:#dfdfdf;letter-spacing:0.026px;">learn-nsrr02.edf</div>
<div class="t" style="left:948.7px;transform:translateX(-100%);top:437.60px;font-size:13px;color:#c4c4c4;letter-spacing:-0.175px;">54.5 MB</div>
<div class="t" style="left:963.3px;top:437.60px;font-size:13px;color:#c4c4c4;letter-spacing:-0.242px;">Aug 11, 2020 at 3:03 PM</div>
<div class="t" style="left:1144.3px;top:437.60px;font-size:13px;color:#c4c4c4;letter-spacing:-0.206px;">Document</div>
<div class="t" style="left:401.3px;top:457.60px;font-size:13px;color:#dfdfdf;letter-spacing:0.056px;">learn-nsrr03-profusion.xml</div>
<div class="t" style="left:948.7px;transform:translateX(-100%);top:457.60px;font-size:13px;color:#c4c4c4;letter-spacing:-0.309px;">178 KB</div>
<div class="t" style="left:963.3px;top:457.60px;font-size:13px;color:#c4c4c4;letter-spacing:-0.242px;">Aug 11, 2020 at 3:03 PM</div>
<div class="t" style="left:1144.3px;top:457.60px;font-size:13px;color:#c4c4c4;letter-spacing:-0.711px;">XML</div>
<div class="t" style="left:401.3px;top:477.60px;font-size:13px;color:#dfdfdf;letter-spacing:0.026px;">learn-nsrr03.edf</div>
<div class="t" style="left:948.7px;transform:translateX(-100%);top:477.60px;font-size:13px;color:#c4c4c4;letter-spacing:-0.103px;">62.2 MB</div>
<div class="t" style="left:963.3px;top:477.60px;font-size:13px;color:#c4c4c4;letter-spacing:-0.242px;">Aug 11, 2020 at 3:03 PM</div>
<div class="t" style="left:1144.3px;top:477.60px;font-size:13px;color:#c4c4c4;letter-spacing:-0.206px;">Document</div>
</div></div>
<!--DG1-->
</div></div>
</body>
</html>
